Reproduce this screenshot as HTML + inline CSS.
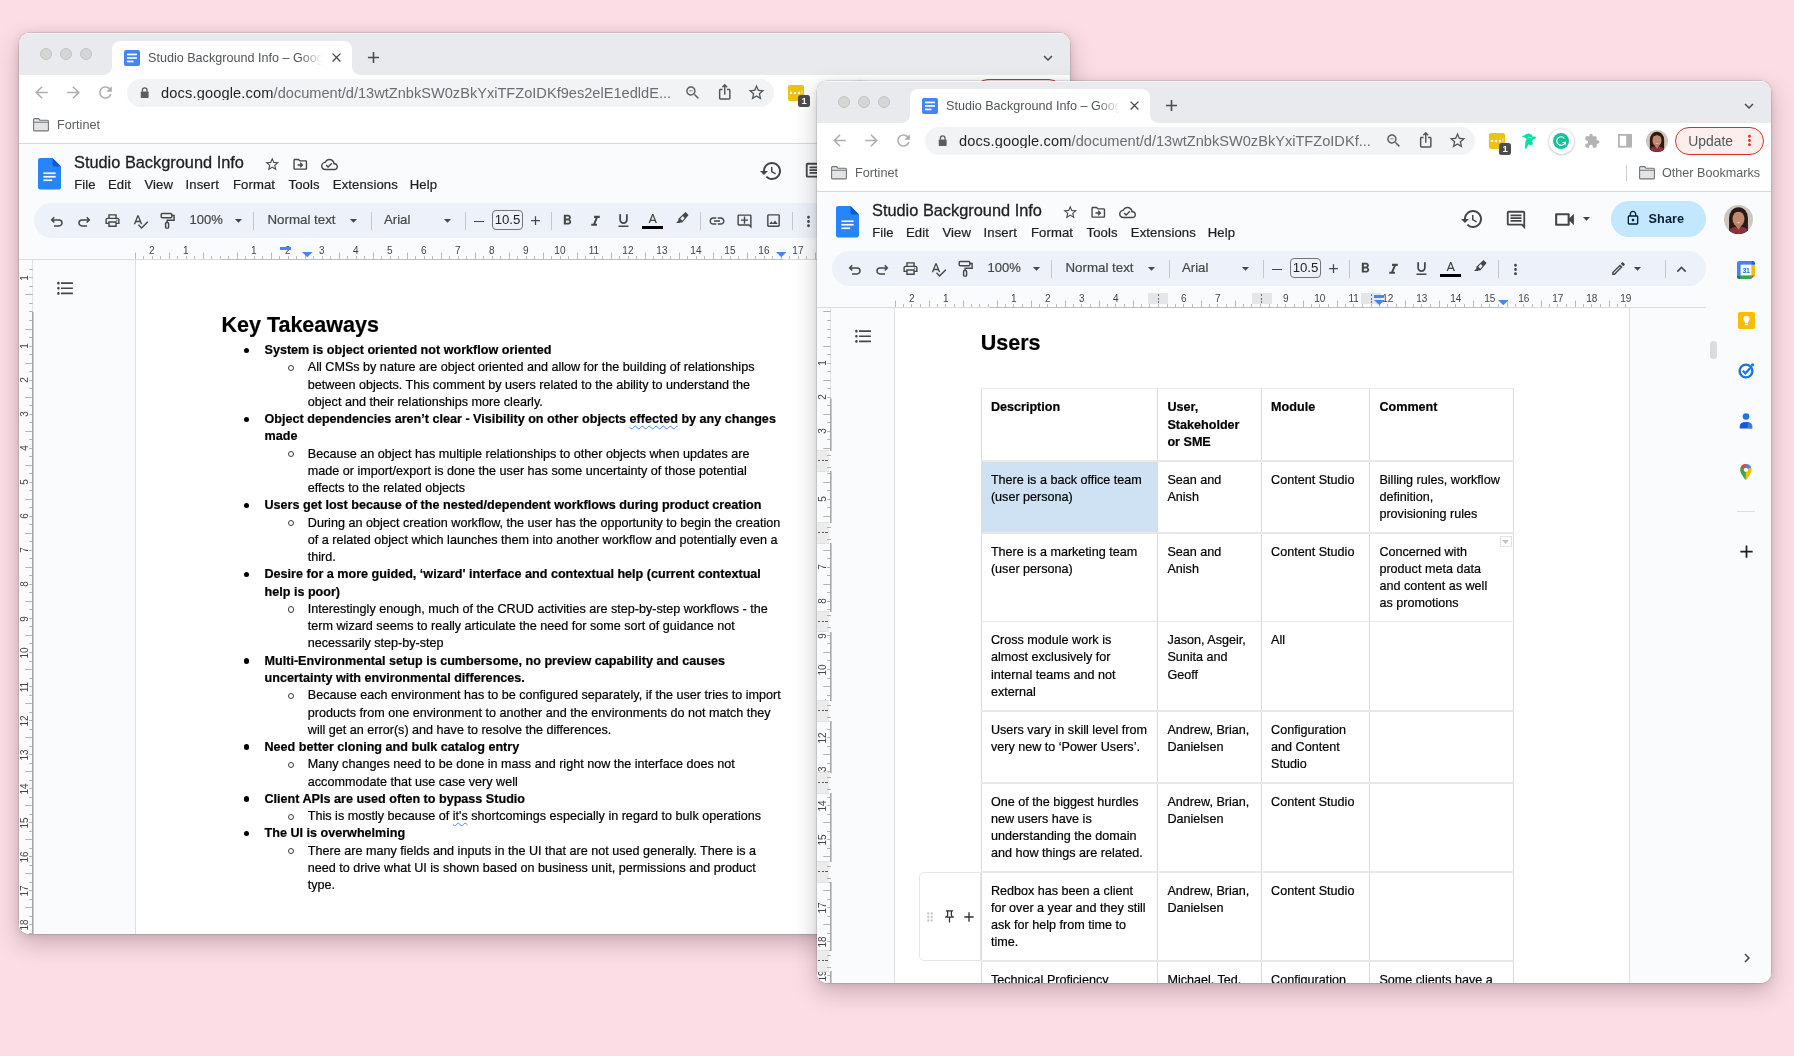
<!DOCTYPE html><html><head><meta charset="utf-8"><title>Studio Background Info</title><style>
*{box-sizing:border-box}
html,body{margin:0;padding:0}
body{width:1794px;height:1056px;background:#fcdde5;position:relative;overflow:hidden;font-family:"Liberation Sans",sans-serif;color:#000}
.win{position:absolute;border-radius:10px;overflow:hidden;background:#fff;will-change:transform}
.shadow{position:absolute;border-radius:10px;box-shadow:0 0 0 0.5px rgba(40,20,25,.22),0 9px 23px 1px rgba(30,5,12,.21),0 1px 9px rgba(30,5,12,.10)}
.abs,.ic,.t{position:absolute}
.t{white-space:nowrap;line-height:1}
.tabstrip{position:absolute;left:0;top:0;right:0;height:42px;background:#e8eaed;box-shadow:inset 0 1px 0 rgba(255,255,255,.55)}
.tl{position:absolute;width:12px;height:12px;border-radius:50%;background:#d6d6d6;border:0.5px solid #c3c3c3;top:14.9px}
.tab{position:absolute;left:93px;top:8px;width:240px;height:34px;background:#fff;border-radius:8px 8px 0 0}
.tab:before,.tab:after{content:"";position:absolute;bottom:0;width:8px;height:8px;background:radial-gradient(circle at 0 0,transparent 7.5px,#fff 8px)}
.tab:before{left:-8px}
.tab:after{right:-8px;background:radial-gradient(circle at 100% 0,transparent 7.5px,#fff 8px)}
.omni{position:absolute;left:108px;top:45.7px;height:28px;background:#f1f3f4;border-radius:14px}
.docs{position:absolute;left:0;right:0;top:110px;bottom:0;background:#f9fbfd;border-top:1px solid #d5d7db}
.pill{position:absolute;left:14.5px;top:169.8px;height:35.6px;border-radius:18px;background:#edf2fa}
.sep{position:absolute;width:1px;height:18px;top:178.6px;background:#c7c7c7}
.menu{-webkit-text-stroke:.22px #1f1f1f;position:absolute;top:144.5px;font-size:13.1px;color:#1f1f1f;white-space:nowrap;line-height:1;letter-spacing:.1px}
.tb{-webkit-text-stroke:.2px #444746;position:absolute;font-size:13px;color:#444746;white-space:nowrap;line-height:1;top:180.4px}
.page{position:absolute;background:#fff;border-left:1px solid #dcdfe3;border-right:1px solid #dcdfe3}
.doc{font-size:12.6px;line-height:17.26px;color:#000;-webkit-text-stroke:.2px #000}
.doc .l{position:absolute;white-space:nowrap;height:17.26px}
.doc b{font-weight:bold}

.rn{position:absolute;font-size:10px;color:#444;line-height:1;transform:translateX(-50%);white-space:nowrap}
.vn{position:absolute;font-size:10px;color:#444;line-height:1;white-space:nowrap;transform:translate(-50%,-50%) rotate(-90deg)}
.cell{position:absolute;border:1px solid #dcdcdc}
.sq{text-decoration:underline wavy #4285f4;text-decoration-thickness:1px;text-underline-offset:2px}
</style></head><body>
<div class="shadow" style="left:19px;top:33px;width:1051px;height:901px"></div>
<div class="win" style="left:19px;top:33px;width:1051px;height:901px">
<div class="tabstrip"></div>
<div class="tl" style="left:21px"></div>
<div class="tl" style="left:41px"></div>
<div class="tl" style="left:61px"></div>
<div class="tab"></div>
<svg class="ic" style="left:105px;top:17px" width="16" height="16" viewBox="0 0 16 16"><rect width="16" height="16" rx="2" fill="#4285f4"/><rect x="3" y="3.6" width="10" height="1.7" fill="#fff"/><rect x="3" y="7.1" width="10" height="1.7" fill="#fff"/><rect x="3" y="10.6" width="6.5" height="1.7" fill="#fff"/></svg>
<div class="abs" style="left:129px;top:17px;width:178px;height:16px;overflow:hidden"><div class="t" style="left:0;top:2.1px;font-size:12.6px;color:#50555a">Studio Background Info – Google Docs</div><div class="abs" style="right:0;top:0;width:26px;height:16px;background:linear-gradient(90deg,rgba(255,255,255,0),#fff 85%)"></div></div>
<svg class="ic" style="left:309.50px;top:17.20px" width="15" height="15" viewBox="0 0 24 24" fill="#484c50" fill-rule="evenodd"><path d="M19 6.41L17.59 5 12 10.59 6.41 5 5 6.41 10.59 12 5 17.59 6.41 19 12 13.41 17.59 19 19 17.59 13.41 12z"/></svg>
<svg class="ic" style="left:345.10px;top:15.20px" width="19" height="19" viewBox="0 0 24 24" fill="#484c50" fill-rule="evenodd"><path d="M19 13h-6v6h-2v-6H5v-2h6V5h2v6h6v2z"/></svg>
<svg class="ic" style="left:1020.00px;top:16.20px" width="18" height="18" viewBox="0 0 24 24" fill="#484c50" fill-rule="evenodd"><path d="M16.59 8.59L12 13.17 7.41 8.59 6 10l6 6 6-6z"/></svg>
<svg class="ic" style="left:12.50px;top:50.20px" width="19" height="19" viewBox="0 0 24 24" fill="#abafb3" fill-rule="evenodd"><path d="M20 11H7.83l5.59-5.59L12 4l-8 8 8 8 1.41-1.41L7.83 13H20v-2z"/></svg>
<svg class="ic" style="left:44.50px;top:50.20px" width="19" height="19" viewBox="0 0 24 24" fill="#abafb3" fill-rule="evenodd"><path d="M12 4l-1.41 1.41L16.17 11H4v2h12.17l-5.58 5.59L12 20l8-8z"/></svg>
<svg class="ic" style="left:76.80px;top:50.20px" width="19" height="19" viewBox="0 0 24 24" fill="#abafb3" fill-rule="evenodd"><path d="M17.65 6.35C16.2 4.9 14.21 4 12 4c-4.42 0-7.99 3.58-7.99 8s3.57 8 7.99 8c3.73 0 6.84-2.55 7.73-6h-2.08c-.82 2.33-3.04 4-5.65 4-3.31 0-6-2.69-6-6s2.69-6 6-6c1.66 0 3.14.69 4.22 1.78L13 11h7V4l-2.35 2.35z"/></svg>
<div class="omni" style="width:646.8px"></div>
<svg class="ic" style="left:121.3px;top:53.9px" width="9.400" height="11.6" viewBox="0 0 10 13"><path d="M2.4 5.2V3.6a2.6 2.6 0 0 1 5.2 0v1.6" fill="none" stroke="#5a5e63" stroke-width="1.5"/><rect x="0.6" y="5" width="8.8" height="7.4" rx="1" fill="#5a5e63"/></svg>
<div class="t" style="left:142px;top:52.5px;font-size:14.6px;color:#6a6e73;width:520px;overflow:hidden"><span style="color:#1f2124;letter-spacing:.15px">docs.google.com</span>/document/d/13wtZnbkSW0zBkYxiTFZoIDKf9es2elE1edldE...</div>
<svg class="ic" style="left:664.65px;top:51.15px" width="17.5" height="17.5" viewBox="0 0 24 24" fill="#5f6368" fill-rule="evenodd"><path d="M15.5 14h-.79l-.28-.27C15.41 12.59 16 11.11 16 9.5 16 5.91 13.09 3 9.5 3S3 5.91 3 9.5 5.91 16 9.5 16c1.61 0 3.09-.59 4.23-1.57l.27.28v.79l5 4.99L20.49 19l-4.99-5zm-6 0C7.01 14 5 11.99 5 9.5S7.01 5 9.5 5 14 7.01 14 9.5 11.99 14 9.5 14zM7 9h5v1H7z"/></svg>
<svg class="ic" style="left:696.65px;top:50.05px" width="17.5" height="17.5" viewBox="0 0 24 24" fill="#50555a" fill-rule="evenodd"><path d="M16 5l-1.42 1.42-1.59-1.59V16h-1.98V4.83L9.42 6.42 8 5l4-4 4 4zm4 5v11c0 1.1-.9 2-2 2H6c-1.11 0-2-.9-2-2V10c0-1.11.89-2 2-2h3v2H6v11h12V10h-3V8h3c1.1 0 2 .9 2 2z"/></svg>
<svg class="ic" style="left:728.30px;top:50.00px" width="19" height="19" viewBox="0 0 24 24" fill="#50555a" fill-rule="evenodd"><path d="M22 9.24l-7.19-.62L12 2 9.19 8.63 2 9.24l5.46 4.73L5.82 21 12 17.27 18.18 21l-1.63-7.03L22 9.24zM12 15.4l-3.76 2.27 1-4.28-3.32-2.88 4.38-.38L12 6.1l1.71 4.04 4.38.38-3.32 2.88 1 4.28L12 15.4z"/></svg>
<div class="abs" style="left:769.0px;top:52px;width:16px;height:16px;border-radius:2px;background:#eec211"></div>
<svg class="ic" style="left:769.0px;top:52px" width="16" height="16" viewBox="0 0 16 16"><circle cx="3" cy="8" r="1.250" fill="#fff"/><circle cx="7" cy="8" r="1.250" fill="#fff"/><circle cx="11" cy="8" r="1.250" fill="#fff"/><rect x="13.4" y="5.300" width="1.200" height="3.200" fill="#f6e08a"/></svg>
<div class="abs" style="left:779.2px;top:62px;width:11.8px;height:11.900px;border-radius:2.5px;background:#4d4d4d;color:#fff;font-size:9.5px;line-height:12px;text-align:center;font-weight:bold">1</div>
<svg class="ic" style="left:801.9px;top:51.800px" width="14.3" height="16.3" viewBox="0 0 14.3 16.3"><path d="M0.25 3 L3.300 2 L4.300 0.400 L5.300 1.200 L6.300 0.200 L7.800 1 Q10.3 1.300 10.4 3.400 L14 3.800 L13.8 5.300 L10.5 6.800 L10.3 8.800 L10.9 11.3 L7.800 12.6 L6.900 10.9 L3.900 16 L3 15.3 L3.400 8.800 L4.800 5.800 L2.800 4.400 L0.300 4.100 Z" fill="#06dfa4"/><path d="M6.200 4.400L9.600 4.700" stroke="#fff" stroke-width=".8"/></svg>
<div class="abs" style="left:828.5px;top:47.5px;width:25px;height:25px;border-radius:50%;background:#fff;box-shadow:0 0.5px 3px rgba(0,0,0,.32)"></div>
<svg class="ic" style="left:833.0px;top:52px" width="16" height="16" viewBox="0 0 16 16"><circle cx="8" cy="8" r="8" fill="#15c39a"/><path d="M11.4 5.300A4.300 4.300 0 1 0 12.2 9.200" fill="none" stroke="#fff" stroke-width="1.150"/><path d="M9.300 9.500 L12.400 9.300 L12.2 11.8" fill="none" stroke="#fff" stroke-width="1.100"/></svg>
<svg class="ic" style="left:864.30px;top:51.70px" width="16" height="16" viewBox="0 0 24 24" fill="#b3b3b3" fill-rule="evenodd"><path d="M20.5 11H19V7c0-1.1-.9-2-2-2h-4V3.5C13 2.12 11.88 1 10.5 1S8 2.12 8 3.5V5H4c-1.1 0-1.99.9-1.99 2v3.8H3.5c1.49 0 2.7 1.21 2.7 2.7s-1.21 2.7-2.7 2.7H2V20c0 1.1.9 2 2 2h3.8v-1.5c0-1.49 1.21-2.7 2.7-2.7 1.49 0 2.7 1.21 2.7 2.7V22H17c1.1 0 2-.9 2-2v-4h1.5c1.38 0 2.5-1.12 2.5-2.5S21.88 11 20.5 11z"/></svg>
<svg class="ic" style="left:897.8px;top:53px" width="14.3" height="13.600" viewBox="0 0 14.3 13.600"><rect x=".9" y=".9" width="12.5" height="11.800" fill="#fff" stroke="#b3b3b3" stroke-width="1.800"/><rect x="8.200" y=".9" width="5.200" height="11.800" fill="#b3b3b3"/></svg>
<svg class="ic" style="left:926.00px;top:48.70px" width="22" height="22" viewBox="0 0 40 40"><defs><clipPath id="c"><circle cx="20" cy="20" r="20"/></clipPath></defs><g clip-path="url(#c)"><rect width="40" height="40" fill="#cfc7bd"/><ellipse cx="20" cy="18" rx="13" ry="15" fill="#2a1a17"/><rect x="7" y="18" width="26" height="24" fill="#2a1a17"/><ellipse cx="20" cy="19" rx="8.2" ry="10.5" fill="#c08a6c"/><path d="M11 14 Q20 2 29 14 Q24 9 20 9.5 Q15 9 11 14z" fill="#2a1a17"/><path d="M4 42 Q6 31 16 30 L20 33 L24 30 Q34 31 36 42z" fill="#8c2f3f"/><path d="M16 29 L20 34 L24 29 L24 26 L16 26z" fill="#b57f62"/><path d="M16.5 23.5 Q20 26.5 23.5 23.5 Q20 25 16.5 23.5z" fill="#fff"/></g></svg>
<div class="abs" style="left:955.0px;top:46px;width:88.5px;height:27.6px;border-radius:14px;border:1px solid #d93025;background:#fceeed"></div>
<div class="t" style="left:968.20px;top:54.20px;font-size:13.9px;color:#50555a;">Update</div>
<svg class="ic" style="left:1020.50px;top:51.30px" width="17" height="17" viewBox="0 0 24 24" fill="#d93025" fill-rule="evenodd"><path d="M12 8c1.1 0 2-.9 2-2s-.9-2-2-2-2 .9-2 2 .9 2 2 2zm0 2c-1.1 0-2 .9-2 2s.9 2 2 2 2-.9 2-2-.9-2-2-2zm0 6c-1.1 0-2 .9-2 2s.9 2 2 2 2-.9 2-2-.9-2-2-2z"/></svg>
<svg class="ic" style="left:14.0px;top:85.2px" width="16" height="13.5" viewBox="0 0 16 13.5"><path d="M0.6 1.6 q0-1 1-1 h4 l1.3 1.6 h7.5 q1 0 1 1 v8.7 q0 1 -1 1 h-12.8 q-1 0 -1-1z" fill="#e3e4e6" stroke="#70757a" stroke-width="1.1"/><path d="M0.6 4.2h14.8" stroke="#70757a" stroke-width="1.1"/></svg>
<div class="t" style="left:38.00px;top:86.30px;font-size:12.7px;color:#5a5e63;">Fortinet</div>
<div class="abs" style="left:906.3px;top:83.5px;width:1px;height:16px;background:#c9ccd0"></div>
<svg class="ic" style="left:918.5px;top:85.2px" width="16" height="13.5" viewBox="0 0 16 13.5"><path d="M0.6 1.6 q0-1 1-1 h4 l1.3 1.6 h7.5 q1 0 1 1 v8.7 q0 1 -1 1 h-12.8 q-1 0 -1-1z" fill="#e3e4e6" stroke="#70757a" stroke-width="1.1"/><path d="M0.6 4.2h14.8" stroke="#70757a" stroke-width="1.1"/></svg>
<div class="t" style="left:942.00px;top:86.30px;font-size:12.6px;color:#5a5e63;">Other Bookmarks</div>
<div class="docs"></div>
<svg class="ic" style="left:19px;top:125px" width="23" height="31.5" viewBox="0 0 23 31.5"><path d="M2.2 0H14.5L23 8.5V29.3q0 2.2-2.2 2.2H2.2Q0 31.500 0 29.300V2.200Q0 0 2.200 0z" fill="#2684fc"/><path d="M14.5 0L23 8.5H16.700q-2.200 0-2.200-2.200z" fill="#0a5ad4"/><rect x="5.4" y="14.400" width="12.200" height="1.700" fill="#fff"/><rect x="5.4" y="17.900" width="12.200" height="1.700" fill="#fff"/><rect x="5.4" y="21.400" width="8.800" height="1.700" fill="#fff"/></svg>
<div class="t" style="left:55.00px;top:121.30px;font-size:16.35px;color:#1f1f1f;-webkit-text-stroke:.3px #1f1f1f">Studio Background Info</div>
<svg class="ic" style="left:244.55px;top:122.75px" width="16.5" height="16.5" viewBox="0 0 24 24" fill="#444746" fill-rule="evenodd"><path d="M22 9.24l-7.19-.62L12 2 9.19 8.63 2 9.24l5.46 4.73L5.82 21 12 17.27 18.18 21l-1.63-7.03L22 9.24zM12 15.4l-3.76 2.27 1-4.28-3.32-2.88 4.38-.38L12 6.1l1.71 4.04 4.38.38-3.32 2.88 1 4.28L12 15.4z"/></svg>
<svg class="ic" style="left:273.35px;top:122.75px" width="16.5" height="16.5" viewBox="0 0 24 24" fill="#444746" fill-rule="evenodd"><path d="M20 6h-8l-2-2H4c-1.1 0-2 .9-2 2v12c0 1.1.9 2 2 2h16c1.1 0 2-.9 2-2V8c0-1.1-.9-2-2-2zm0 12H4V6h5.17l2 2H20v10zm-7.5-1l4-4-4-4-1.41 1.41L12.67 12H8v2h4.67l-1.58 1.59L12.5 17z"/></svg>
<svg class="ic" style="left:301.70px;top:122.50px" width="17" height="17" viewBox="0 0 24 24" fill="#444746" fill-rule="evenodd"><path d="M19.35 10.04C18.67 6.59 15.64 4 12 4 9.11 4 6.6 5.64 5.35 8.04 2.34 8.36 0 10.91 0 14c0 3.31 2.69 6 6 6h13c2.76 0 5-2.24 5-5 0-2.64-2.05-4.78-4.65-4.96zM19 18H6c-2.21 0-4-1.79-4-4s1.79-4 4-4h.71C7.37 7.69 9.48 6 12 6c3.04 0 5.5 2.46 5.5 5.5v.5H19c1.66 0 3 1.34 3 3s-1.34 3-3 3zm-9-3.82l-2.09-2.09L6.5 13.5 10 17l6.01-6.01-1.41-1.41z"/></svg>
<div class="menu" style="left:55.2px">File</div>
<div class="menu" style="left:89px">Edit</div>
<div class="menu" style="left:125.5px">View</div>
<div class="menu" style="left:166.6px">Insert</div>
<div class="menu" style="left:214px">Format</div>
<div class="menu" style="left:269.6px">Tools</div>
<div class="menu" style="left:313.8px">Extensions</div>
<div class="menu" style="left:390.7px">Help</div>
<svg class="ic" style="left:739.70px;top:125.60px" width="24" height="24" viewBox="0 0 24 24" fill="#444746" fill-rule="evenodd"><path d="M13 3c-4.97 0-9 4.03-9 9H1l3.89 3.89.07.14L9 12H6c0-3.87 3.13-7 7-7s7 3.13 7 7-3.13 7-7 7c-1.93 0-3.68-.79-4.94-2.06l-1.42 1.42C8.27 19.99 10.51 21 13 21c4.97 0 9-4.03 9-9s-4.03-9-9-9zm-1 5v5l4.28 2.54.72-1.21-3.5-2.08V8H12z"/></svg>
<svg class="ic" style="left:785.00px;top:127.50px" width="22" height="22" viewBox="0 0 24 24" fill="#444746" fill-rule="evenodd"><path d="M21.99 4c0-1.1-.89-2-1.99-2H4c-1.1 0-2 .9-2 2v12c0 1.1.9 2 2 2h14l4 4-.01-18zM20 4v13.17L18.83 16H4V4h16zM6 12h12v2H6zm0-3h12v2H6zm0-3h12v2H6z"/></svg>
<svg class="ic" style="left:831.50px;top:125.50px" width="25" height="25" viewBox="0 0 24 24" fill="#444746" fill-rule="evenodd"><path d="M15 8v8H5V8h10m1-2H4c-.55 0-1 .45-1 1v10c0 .55.45 1 1 1h12c.55 0 1-.45 1-1v-3.5l4 4v-11l-4 4V7c0-.55-.45-1-1-1z"/></svg>
<svg class="ic" style="left:857.50px;top:129.10px" width="17" height="17" viewBox="0 0 24 24" fill="#444746" fill-rule="evenodd"><path d="M7 10l5 5 5-5z"/></svg>
<div class="abs" style="left:890.7px;top:120px;width:95.3px;height:35.8px;border-radius:18px;background:#c2e7ff"></div>
<svg class="ic" style="left:905.00px;top:129.30px" width="16" height="16" viewBox="0 0 24 24" fill="#001d35" fill-rule="evenodd"><path d="M18 8h-1V6c0-2.76-2.24-5-5-5S7 3.24 7 6v2H6c-1.1 0-2 .9-2 2v10c0 1.1.9 2 2 2h12c1.1 0 2-.9 2-2V10c0-1.1-.9-2-2-2zM9 6c0-1.66 1.34-3 3-3s3 1.34 3 3v2H9V6zm9 14H6V10h12v10zm-6-3c1.1 0 2-.9 2-2s-.9-2-2-2-2 .9-2 2 .9 2 2 2z"/></svg>
<div class="t" style="left:928.50px;top:131.90px;font-size:12.7px;color:#001d35;letter-spacing:.1px"><b>Share</b></div>
<svg class="ic" style="left:1004.10px;top:123.50px" width="29.0" height="29.0" viewBox="0 0 40 40"><defs><clipPath id="c"><circle cx="20" cy="20" r="20"/></clipPath></defs><g clip-path="url(#c)"><rect width="40" height="40" fill="#cfc7bd"/><ellipse cx="20" cy="18" rx="13" ry="15" fill="#2a1a17"/><rect x="7" y="18" width="26" height="24" fill="#2a1a17"/><ellipse cx="20" cy="19" rx="8.2" ry="10.5" fill="#c08a6c"/><path d="M11 14 Q20 2 29 14 Q24 9 20 9.5 Q15 9 11 14z" fill="#2a1a17"/><path d="M4 42 Q6 31 16 30 L20 33 L24 30 Q34 31 36 42z" fill="#8c2f3f"/><path d="M16 29 L20 34 L24 29 L24 26 L16 26z" fill="#b57f62"/><path d="M16.5 23.5 Q20 26.5 23.5 23.5 Q20 25 16.5 23.5z" fill="#fff"/></g></svg>
<div class="pill" style="width:971.5px"></div>
<svg class="ic" style="left:29.799999999999997px;top:179.7px" width="16" height="16" viewBox="0 0 16 16" fill="none" stroke="#444746" stroke-width="1.5"><path d="M5.2 4.3 L2.7 6.9 L5.3 9.5"/><path d="M3 6.9 H10 A3 3 0 0 1 10 12.9 H5"/></svg>
<svg class="ic" style="left:57.2px;top:179.7px" width="16" height="16" viewBox="0 0 16 16" fill="none" stroke="#444746" stroke-width="1.5"><path d="M10.8 4.3 L13.3 6.9 L10.700 9.5"/><path d="M13 6.9 H6 A3 3 0 0 0 6 12.9 H11"/></svg>
<svg class="ic" style="left:85.00px;top:179.20px" width="17" height="17" viewBox="0 0 24 24" fill="#444746" fill-rule="evenodd"><path d="M19 8h-1V3H6v5H5c-1.66 0-3 1.34-3 3v6h4v4h12v-4h4v-6c0-1.66-1.34-3-3-3zM8 5h8v3H8V5zm8 14H8v-4h8v4zm2-4v-2H6v2H4v-4c0-.55.45-1 1-1h14c.55 0 1 .45 1 1v4h-2zM18 10.5c-.55 0-1 .45-1 1s.45 1 1 1 1-.45 1-1-.45-1-1-1z"/></svg>
<svg class="ic" style="left:113.00px;top:179.70px" width="17" height="17" viewBox="0 0 24 24" fill="#444746" fill-rule="evenodd"><path d="M12.45 16h2.09L9.43 3H7.57L2.46 16h2.09l1.12-3h5.64l1.14 3zm-6.02-5L8.5 5.48 10.57 11H6.43zm15.16.59l-8.09 8.09L9.83 16l-1.41 1.41 5.09 5.09L23 13l-1.41-1.41z"/></svg>
<svg class="ic" style="left:140.6px;top:179.1px" width="16" height="18" viewBox="0 0 16 18" fill="none" stroke="#444746" stroke-width="1.45"><rect x="1.2" y="1.400" width="10.6" height="4.300" rx="1"/><path d="M11.8 3.500H14.1V8.300H7.100V10.5"/><rect x="5.6" y="10.5" width="3" height="5.600" rx=".9"/></svg>
<div class="tb" style="left:170.6px">100%</div>
<svg class="ic" style="left:211.00px;top:179.40px" width="17" height="17" viewBox="0 0 24 24" fill="#444746" fill-rule="evenodd"><path d="M7 10l5 5 5-5z"/></svg>
<div class="sep" style="left:234.4px"></div>
<div class="tb" style="left:248.5px;font-size:13.3px">Normal text</div>
<svg class="ic" style="left:326.00px;top:179.40px" width="17" height="17" viewBox="0 0 24 24" fill="#444746" fill-rule="evenodd"><path d="M7 10l5 5 5-5z"/></svg>
<div class="sep" style="left:351.5px"></div>
<div class="tb" style="left:365px;font-size:13.2px">Arial</div>
<svg class="ic" style="left:419.50px;top:179.40px" width="17" height="17" viewBox="0 0 24 24" fill="#444746" fill-rule="evenodd"><path d="M7 10l5 5 5-5z"/></svg>
<div class="sep" style="left:445.5px"></div>
<div class="abs" style="left:454.600px;top:187.5px;width:10px;height:1.5px;background:#444746"></div>
<div class="abs" style="left:473.3px;top:176.6px;width:30.4px;height:20.6px;border:1px solid #747775;border-radius:4px;font-size:13.2px;line-height:18.6px;text-align:center;color:#1f1f1f">10.5</div>
<svg class="ic" style="left:509.00px;top:180.20px" width="15" height="15" viewBox="0 0 24 24" fill="#444746" fill-rule="evenodd"><path d="M19 13h-6v6h-2v-6H5v-2h6V5h2v6h6v2z"/></svg>
<div class="sep" style="left:531.5px"></div>
<svg class="ic" style="left:539.95px;top:179.35px" width="16.5" height="16.5" viewBox="0 0 24 24" fill="#444746" fill-rule="evenodd"><path d="M15.6 10.79c.97-.67 1.65-1.77 1.65-2.79 0-2.26-1.75-4-4-4H7v14h7.04c2.09 0 3.71-1.7 3.71-3.79 0-1.52-.86-2.82-2.15-3.42zM10 6.5h3c.83 0 1.5.67 1.5 1.5s-.67 1.5-1.5 1.5h-3v-3zm3.5 9H10v-3h3.5c.83 0 1.5.67 1.5 1.5s-.67 1.5-1.5 1.5z"/></svg>
<svg class="ic" style="left:568.00px;top:179.70px" width="17" height="17" viewBox="0 0 24 24" fill="#444746" fill-rule="evenodd"><path d="M10 4v3h2.21l-3.42 8H6v3h8v-3h-2.21l3.42-8H18V4z"/></svg>
<svg class="ic" style="left:595.80px;top:179.30px" width="17" height="17" viewBox="0 0 24 24" fill="#444746" fill-rule="evenodd"><path d="M12 17c3.31 0 6-2.69 6-6V3h-2.5v8c0 1.93-1.57 3.5-3.5 3.5S8.5 12.93 8.5 11V3H6v8c0 3.31 2.69 6 6 6zm-7 2v2h14v-2H5z"/></svg>
<svg class="ic" style="left:625.65px;top:178.85px" width="15.5" height="15.5" viewBox="0 0 24 24" fill="#444746" fill-rule="evenodd"><path d="M11 3L5.5 17h2.25l1.12-3h6.25l1.12 3h2.25L13 3h-2zm-1.38 9L12 5.67 14.38 12H9.62z"/></svg>
<div class="abs" style="left:623px;top:192.8px;width:21px;height:3.2px;background:#000"></div>
<svg class="ic" style="left:657.4px;top:179px" width="12.6" height="11.2" viewBox="0 0 12.6 11.2" fill-rule="evenodd"><path d="M9.500 0 L12.6 3.100 L6.300 10.4 L4.300 10.4 L3.700 11.1 L0 11.1 L2.400 8.600 L2.400 6.700 Z M4.300 6.700 L6.300 8.700 L8.700 5.900 L6.700 3.900 Z" fill="#444746"/></svg>
<div class="sep" style="left:680.8px"></div>
<svg class="ic" style="left:688.70px;top:178.90px" width="18" height="18" viewBox="0 0 24 24" fill="#444746" fill-rule="evenodd"><path d="M3.9 12c0-1.71 1.39-3.1 3.1-3.1h4V7H7c-2.76 0-5 2.24-5 5s2.24 5 5 5h4v-1.9H7c-1.71 0-3.1-1.39-3.1-3.1zM8 13h8v-2H8v2zm9-6h-4v1.9h4c1.71 0 3.1 1.39 3.1 3.1s-1.39 3.1-3.1 3.1h-4V17h4c2.76 0 5-2.24 5-5s-2.24-5-5-5z"/></svg>
<svg class="ic" style="left:717.30px;top:180.00px" width="17" height="17" viewBox="0 0 24 24" fill="#444746" fill-rule="evenodd"><path d="M22 4c0-1.1-.9-2-2-2H4c-1.1 0-2 .9-2 2v12c0 1.1.9 2 2 2h14l4 4V4zm-2 13.17L18.83 16H4V4h16v13.17zM13 5h-2v4H7v2h4v4h2v-4h4V9h-4z"/></svg>
<svg class="ic" style="left:745.50px;top:179.40px" width="17" height="17" viewBox="0 0 24 24" fill="#444746" fill-rule="evenodd"><path d="M19 5v14H5V5h14m0-2H5c-1.1 0-2 .9-2 2v14c0 1.1.9 2 2 2h14c1.1 0 2-.9 2-2V5c0-1.1-.9-2-2-2zm-4.86 8.86l-3 3.87L9 13.14 6 17h12l-3.86-5.14z"/></svg>
<div class="sep" style="left:773px"></div>
<svg class="ic" style="left:781.20px;top:179.60px" width="17" height="17" viewBox="0 0 24 24" fill="#444746" fill-rule="evenodd"><path d="M12 8c1.1 0 2-.9 2-2s-.9-2-2-2-2 .9-2 2 .9 2 2 2zm0 2c-1.1 0-2 .9-2 2s.9 2 2 2 2-.9 2-2-.9-2-2-2zm0 6c-1.1 0-2 .9-2 2s.9 2 2 2 2-.9 2-2-.9-2-2-2z"/></svg>
<div class="page" style="left:115.5px;top:227px;width:736px;height:674px"></div>
<div class="abs" style="left:0;top:226px;width:986px;height:1px;background:#d9dce0"></div>
<div class="abs" style="left:202.0px;top:225.5px;width:562.2px;height:1.3px;background:#bdc0c3"></div>
<svg class="ic" style="left:0;top:0" width="1051" height="230"><path d="M116.50 219.400V226 M124.50 223V226 M133.50 223V226 M141.50 223V226 M150.50 219.400V226 M158.50 223V226 M167.50 223V226 M175.50 223V226 M184.50 219.400V226 M192.50 223V226 M201.50 223V226 M209.50 223V226 M218.50 219.400V226 M226.50 223V226 M235.50 223V226 M243.50 223V226 M252.50 219.400V226 M260.50 223V226 M269.50 223V226 M277.50 223V226 M286.50 219.400V226 M294.50 223V226 M303.50 223V226 M311.50 223V226 M320.50 219.400V226 M328.50 223V226 M337.50 223V226 M345.50 223V226 M354.50 219.400V226 M362.50 223V226 M371.50 223V226 M379.50 223V226 M388.50 219.400V226 M396.50 223V226 M405.50 223V226 M413.50 223V226 M422.50 219.400V226 M430.50 223V226 M439.50 223V226 M447.50 223V226 M456.50 219.400V226 M464.50 223V226 M473.50 223V226 M481.50 223V226 M490.50 219.400V226 M498.50 223V226 M507.50 223V226 M515.50 223V226 M524.50 219.400V226 M532.50 223V226 M541.50 223V226 M549.50 223V226 M558.50 219.400V226 M566.50 223V226 M575.50 223V226 M583.50 223V226 M592.50 219.400V226 M600.50 223V226 M609.50 223V226 M617.50 223V226 M626.50 219.400V226 M634.50 223V226 M643.50 223V226 M651.50 223V226 M660.50 219.400V226 M668.50 223V226 M677.50 223V226 M685.50 223V226 M694.50 219.400V226 M702.50 223V226 M711.50 223V226 M719.50 223V226 M728.50 219.400V226 M736.50 223V226 M745.50 223V226 M753.50 223V226 M762.50 219.400V226 M770.50 223V226 M779.50 223V226 M787.50 223V226 M796.50 219.400V226 M804.50 223V226 M813.50 223V226 M821.50 223V226 M830.50 219.400V226 M838.50 223V226 M847.50 223V226" stroke="#b9bcbf" stroke-width="1" fill="none"/></svg>
<div class="rn" style="left:166.9px;top:212.800px">1</div>
<div class="rn" style="left:132.9px;top:212.800px">2</div>
<div class="rn" style="left:234.9px;top:212.800px">1</div>
<div class="rn" style="left:268.9px;top:212.800px">2</div>
<div class="rn" style="left:302.9px;top:212.800px">3</div>
<div class="rn" style="left:336.9px;top:212.800px">4</div>
<div class="rn" style="left:370.9px;top:212.800px">5</div>
<div class="rn" style="left:404.9px;top:212.800px">6</div>
<div class="rn" style="left:438.9px;top:212.800px">7</div>
<div class="rn" style="left:472.9px;top:212.800px">8</div>
<div class="rn" style="left:506.9px;top:212.800px">9</div>
<div class="rn" style="left:540.9px;top:212.800px">10</div>
<div class="rn" style="left:574.9px;top:212.800px">11</div>
<div class="rn" style="left:608.9px;top:212.800px">12</div>
<div class="rn" style="left:642.9px;top:212.800px">13</div>
<div class="rn" style="left:676.9px;top:212.800px">14</div>
<div class="rn" style="left:710.9px;top:212.800px">15</div>
<div class="rn" style="left:744.9px;top:212.800px">16</div>
<div class="rn" style="left:778.9px;top:212.800px">17</div>
<div class="rn" style="left:812.9px;top:212.800px">18</div>
<div class="rn" style="left:846.9px;top:212.800px">19</div>
<div class="rn" style="left:880.9px;top:212.800px">20</div>
<div class="rn" style="left:914.9px;top:212.800px">21</div>
<div class="rn" style="left:948.9px;top:212.800px">22</div>
<div class="rn" style="left:982.9px;top:212.800px">23</div>
<div class="rn" style="left:1016.9px;top:212.800px">24</div>
<div class="abs" style="left:261.1px;top:214.4px;width:10.9px;height:2.8px;background:#4285f4"></div>
<svg class="ic" style="left:283px;top:218.600px" width="10.6" height="5.200"><path d="M0 0H10.6L5.3 5.2z" fill="#4285f4"/></svg>
<svg class="ic" style="left:756.700px;top:218.600px" width="10.6" height="5.200"><path d="M0 0H10.6L5.3 5.2z" fill="#4285f4"/></svg>
<div class="abs" style="left:0;top:227px;width:13.6px;height:674px;background:#f9fbfd"></div>
<div class="abs" style="left:13.3px;top:227px;width:1px;height:674px;background:#dfe2e5"></div>
<svg class="ic" style="left:0;top:0" width="16" height="901"><path d="M10.2 236.50H13.6 M10.2 244.50H13.6 M10.2 253.50H13.6 M6.3 261.50H13.6 M10.2 270.50H13.6 M10.2 278.50H13.6 M10.2 287.50H13.6 M6.3 296.50H13.6 M10.2 304.50H13.6 M10.2 313.50H13.6 M10.2 321.50H13.6 M6.3 330.50H13.6 M10.2 338.50H13.6 M10.2 347.50H13.6 M10.2 355.50H13.6 M6.3 364.50H13.6 M10.2 372.50H13.6 M10.2 381.50H13.6 M10.2 389.50H13.6 M6.3 398.50H13.6 M10.2 406.50H13.6 M10.2 415.50H13.6 M10.2 423.50H13.6 M6.3 432.50H13.6 M10.2 440.50H13.6 M10.2 449.50H13.6 M10.2 457.50H13.6 M6.3 466.50H13.6 M10.2 474.50H13.6 M10.2 483.50H13.6 M10.2 491.50H13.6 M6.3 500.50H13.6 M10.2 508.50H13.6 M10.2 517.50H13.6 M10.2 525.50H13.6 M6.3 534.50H13.6 M10.2 542.50H13.6 M10.2 551.50H13.6 M10.2 559.50H13.6 M6.3 568.50H13.6 M10.2 576.50H13.6 M10.2 585.50H13.6 M10.2 593.50H13.6 M6.3 602.50H13.6 M10.2 610.50H13.6 M10.2 619.50H13.6 M10.2 628.50H13.6 M6.3 636.50H13.6 M10.2 645.50H13.6 M10.2 653.50H13.6 M10.2 662.50H13.6 M6.3 670.50H13.6 M10.2 679.50H13.6 M10.2 687.50H13.6 M10.2 696.50H13.6 M6.3 704.50H13.6 M10.2 713.50H13.6 M10.2 721.50H13.6 M10.2 730.50H13.6 M6.3 738.50H13.6 M10.2 747.50H13.6 M10.2 755.50H13.6 M10.2 764.50H13.6 M6.3 772.50H13.6 M10.2 781.50H13.6 M10.2 789.50H13.6 M10.2 798.50H13.6 M6.3 806.50H13.6 M10.2 815.50H13.6 M10.2 823.50H13.6 M10.2 832.50H13.6 M6.3 840.50H13.6 M10.2 849.50H13.6 M10.2 857.50H13.6 M10.2 866.50H13.6 M6.3 874.50H13.6 M10.2 883.50H13.6 M10.2 891.50H13.6 M10.2 900.50H13.6" stroke="#b0b3b6" stroke-width="1" fill="none"/><path d="M13.8 279V901" stroke="#a6a9ac" stroke-width="1.6"/></svg>
<div class="vn" style="left:6px;top:244.9px">1</div>
<div class="vn" style="left:6px;top:313.1px">1</div>
<div class="vn" style="left:6px;top:347.1px">2</div>
<div class="vn" style="left:6px;top:381.1px">3</div>
<div class="vn" style="left:6px;top:415.2px">4</div>
<div class="vn" style="left:6px;top:449.2px">5</div>
<div class="vn" style="left:6px;top:483.3px">6</div>
<div class="vn" style="left:6px;top:517.3px">7</div>
<div class="vn" style="left:6px;top:551.4px">8</div>
<div class="vn" style="left:6px;top:585.5px">9</div>
<div class="vn" style="left:6px;top:619.5px">10</div>
<div class="vn" style="left:6px;top:653.5px">11</div>
<div class="vn" style="left:6px;top:687.6px">12</div>
<div class="vn" style="left:6px;top:721.6px">13</div>
<div class="vn" style="left:6px;top:755.7px">14</div>
<div class="vn" style="left:6px;top:789.8px">15</div>
<div class="vn" style="left:6px;top:823.8px">16</div>
<div class="vn" style="left:6px;top:857.8px">17</div>
<div class="vn" style="left:6px;top:891.9px">18</div>
<svg class="ic" style="left:35.75px;top:245.35px" width="20.5" height="20.5" viewBox="0 0 24 24" fill="#444746" fill-rule="evenodd"><path d="M4 10.5c-.83 0-1.5.67-1.5 1.5s.67 1.5 1.5 1.5 1.5-.67 1.5-1.5-.67-1.5-1.5-1.5zm0-6c-.83 0-1.5.67-1.5 1.5S3.17 7.5 4 7.5 5.5 6.83 5.5 6 4.83 4.5 4 4.5zm0 12c-.83 0-1.5.68-1.5 1.5s.68 1.5 1.5 1.5 1.5-.68 1.5-1.5-.67-1.5-1.5-1.5zM7 19h14v-2H7v2zm0-6h14v-2H7v2zm0-8v2h14V5H7z"/></svg>
<div class="doc">
<div class="l" style="left:202.5px;top:280.30px;font-size:21.5px;line-height:24px;height:24px"><b>Key Takeaways</b></div>
<div class="l" style="left:245.5px;top:309.07px"><b>System is object oriented not workflow oriented</b></div>
<div class="abs" style="left:224.80px;top:314.50px;width:5.6px;height:5.6px;border-radius:50%;background:#000"></div>
<div class="l" style="left:288.800px;top:326.33px">All CMSs by nature are object oriented and allow for the building of relationships</div>
<div class="abs" style="left:268.50px;top:331.76px;width:6.2px;height:6.2px;border-radius:50%;border:0.75px solid #3a3a3a"></div>
<div class="l" style="left:288.800px;top:343.59px">between objects. This comment by users related to the ability to understand the</div>
<div class="l" style="left:288.800px;top:360.85px">object and their relationships more clearly.</div>
<div class="l" style="left:245.5px;top:378.11px"><b>Object dependencies aren’t clear - Visibility on other objects <span class="sq">effected</span> by any changes</b></div>
<div class="abs" style="left:224.80px;top:383.54px;width:5.6px;height:5.6px;border-radius:50%;background:#000"></div>
<div class="l" style="left:245.5px;top:395.37px"><b>made</b></div>
<div class="l" style="left:288.800px;top:412.63px">Because an object has multiple relationships to other objects when updates are</div>
<div class="abs" style="left:268.50px;top:418.06px;width:6.2px;height:6.2px;border-radius:50%;border:0.75px solid #3a3a3a"></div>
<div class="l" style="left:288.800px;top:429.89px">made or import/export is done the user has some uncertainty of those potential</div>
<div class="l" style="left:288.800px;top:447.15px">effects to the related objects</div>
<div class="l" style="left:245.5px;top:464.41px"><b>Users get lost because of the nested/dependent workflows during product creation</b></div>
<div class="abs" style="left:224.80px;top:469.84px;width:5.6px;height:5.6px;border-radius:50%;background:#000"></div>
<div class="l" style="left:288.800px;top:481.67px">During an object creation workflow, the user has the opportunity to begin the creation</div>
<div class="abs" style="left:268.50px;top:487.10px;width:6.2px;height:6.2px;border-radius:50%;border:0.75px solid #3a3a3a"></div>
<div class="l" style="left:288.800px;top:498.93px">of a related object which launches them into another workflow and potentially even a</div>
<div class="l" style="left:288.800px;top:516.19px">third.</div>
<div class="l" style="left:245.5px;top:533.45px"><b>Desire for a more guided, ‘wizard' interface and contextual help (current contextual</b></div>
<div class="abs" style="left:224.80px;top:538.88px;width:5.6px;height:5.6px;border-radius:50%;background:#000"></div>
<div class="l" style="left:245.5px;top:550.71px"><b>help is poor)</b></div>
<div class="l" style="left:288.800px;top:567.97px">Interestingly enough, much of the CRUD activities are step-by-step workflows - the</div>
<div class="abs" style="left:268.50px;top:573.40px;width:6.2px;height:6.2px;border-radius:50%;border:0.75px solid #3a3a3a"></div>
<div class="l" style="left:288.800px;top:585.23px">term wizard seems to really articulate the need for some sort of guidance not</div>
<div class="l" style="left:288.800px;top:602.49px">necessarily step-by-step</div>
<div class="l" style="left:245.5px;top:619.75px"><b>Multi-Environmental setup is cumbersome, no preview capability and causes</b></div>
<div class="abs" style="left:224.80px;top:625.18px;width:5.6px;height:5.6px;border-radius:50%;background:#000"></div>
<div class="l" style="left:245.5px;top:637.01px"><b>uncertainty with environmental differences.</b></div>
<div class="l" style="left:288.800px;top:654.27px">Because each environment has to be configured separately, if the user tries to import</div>
<div class="abs" style="left:268.50px;top:659.70px;width:6.2px;height:6.2px;border-radius:50%;border:0.75px solid #3a3a3a"></div>
<div class="l" style="left:288.800px;top:671.53px">products from one environment to another and the environments do not match they</div>
<div class="l" style="left:288.800px;top:688.79px">will get an error(s) and have to resolve the differences.</div>
<div class="l" style="left:245.5px;top:706.05px"><b>Need better cloning and bulk catalog entry</b></div>
<div class="abs" style="left:224.80px;top:711.48px;width:5.6px;height:5.6px;border-radius:50%;background:#000"></div>
<div class="l" style="left:288.800px;top:723.31px">Many changes need to be done in mass and right now the interface does not</div>
<div class="abs" style="left:268.50px;top:728.74px;width:6.2px;height:6.2px;border-radius:50%;border:0.75px solid #3a3a3a"></div>
<div class="l" style="left:288.800px;top:740.57px">accommodate that use case very well</div>
<div class="l" style="left:245.5px;top:757.83px"><b>Client APIs are used often to bypass Studio</b></div>
<div class="abs" style="left:224.80px;top:763.26px;width:5.6px;height:5.6px;border-radius:50%;background:#000"></div>
<div class="l" style="left:288.800px;top:775.09px">This is mostly because of <span class="sq">it's</span> shortcomings especially in regard to bulk operations</div>
<div class="abs" style="left:268.50px;top:780.52px;width:6.2px;height:6.2px;border-radius:50%;border:0.75px solid #3a3a3a"></div>
<div class="l" style="left:245.5px;top:792.35px"><b>The UI is overwhelming</b></div>
<div class="abs" style="left:224.80px;top:797.78px;width:5.6px;height:5.6px;border-radius:50%;background:#000"></div>
<div class="l" style="left:288.800px;top:809.61px">There are many fields and inputs in the UI that are not used generally. There is a</div>
<div class="abs" style="left:268.50px;top:815.04px;width:6.2px;height:6.2px;border-radius:50%;border:0.75px solid #3a3a3a"></div>
<div class="l" style="left:288.800px;top:826.87px">need to drive what UI is shown based on business unit, permissions and product</div>
<div class="l" style="left:288.800px;top:844.13px">type.</div>
</div>
</div>
<div class="shadow" style="left:817px;top:81px;width:954px;height:902px"></div>
<div class="win" style="left:817px;top:81px;width:954px;height:902px">
<div class="tabstrip"></div>
<div class="tl" style="left:21px"></div>
<div class="tl" style="left:41px"></div>
<div class="tl" style="left:61px"></div>
<div class="tab"></div>
<svg class="ic" style="left:105px;top:17px" width="16" height="16" viewBox="0 0 16 16"><rect width="16" height="16" rx="2" fill="#4285f4"/><rect x="3" y="3.6" width="10" height="1.7" fill="#fff"/><rect x="3" y="7.1" width="10" height="1.7" fill="#fff"/><rect x="3" y="10.6" width="6.5" height="1.7" fill="#fff"/></svg>
<div class="abs" style="left:129px;top:17px;width:178px;height:16px;overflow:hidden"><div class="t" style="left:0;top:2.1px;font-size:12.6px;color:#50555a">Studio Background Info – Google Docs</div><div class="abs" style="right:0;top:0;width:26px;height:16px;background:linear-gradient(90deg,rgba(255,255,255,0),#fff 85%)"></div></div>
<svg class="ic" style="left:309.50px;top:17.20px" width="15" height="15" viewBox="0 0 24 24" fill="#484c50" fill-rule="evenodd"><path d="M19 6.41L17.59 5 12 10.59 6.41 5 5 6.41 10.59 12 5 17.59 6.41 19 12 13.41 17.59 19 19 17.59 13.41 12z"/></svg>
<svg class="ic" style="left:345.10px;top:15.20px" width="19" height="19" viewBox="0 0 24 24" fill="#484c50" fill-rule="evenodd"><path d="M19 13h-6v6h-2v-6H5v-2h6V5h2v6h6v2z"/></svg>
<svg class="ic" style="left:923.00px;top:16.20px" width="18" height="18" viewBox="0 0 24 24" fill="#484c50" fill-rule="evenodd"><path d="M16.59 8.59L12 13.17 7.41 8.59 6 10l6 6 6-6z"/></svg>
<svg class="ic" style="left:12.50px;top:50.20px" width="19" height="19" viewBox="0 0 24 24" fill="#abafb3" fill-rule="evenodd"><path d="M20 11H7.83l5.59-5.59L12 4l-8 8 8 8 1.41-1.41L7.83 13H20v-2z"/></svg>
<svg class="ic" style="left:44.50px;top:50.20px" width="19" height="19" viewBox="0 0 24 24" fill="#abafb3" fill-rule="evenodd"><path d="M12 4l-1.41 1.41L16.17 11H4v2h12.17l-5.58 5.59L12 20l8-8z"/></svg>
<svg class="ic" style="left:76.80px;top:50.20px" width="19" height="19" viewBox="0 0 24 24" fill="#abafb3" fill-rule="evenodd"><path d="M17.65 6.35C16.2 4.9 14.21 4 12 4c-4.42 0-7.99 3.58-7.99 8s3.57 8 7.99 8c3.73 0 6.84-2.55 7.73-6h-2.08c-.82 2.33-3.04 4-5.65 4-3.31 0-6-2.69-6-6s2.69-6 6-6c1.66 0 3.14.69 4.22 1.78L13 11h7V4l-2.35 2.35z"/></svg>
<div class="omni" style="width:549.8px"></div>
<svg class="ic" style="left:121.3px;top:53.9px" width="9.400" height="11.6" viewBox="0 0 10 13"><path d="M2.4 5.2V3.6a2.6 2.6 0 0 1 5.2 0v1.6" fill="none" stroke="#5a5e63" stroke-width="1.5"/><rect x="0.6" y="5" width="8.8" height="7.4" rx="1" fill="#5a5e63"/></svg>
<div class="t" style="left:142px;top:52.5px;font-size:14.6px;color:#6a6e73;width:420px;overflow:hidden"><span style="color:#1f2124;letter-spacing:.15px">docs.google.com</span>/document/d/13wtZnbkSW0zBkYxiTFZoIDKf...</div>
<svg class="ic" style="left:567.65px;top:51.15px" width="17.5" height="17.5" viewBox="0 0 24 24" fill="#5f6368" fill-rule="evenodd"><path d="M15.5 14h-.79l-.28-.27C15.41 12.59 16 11.11 16 9.5 16 5.91 13.09 3 9.5 3S3 5.91 3 9.5 5.91 16 9.5 16c1.61 0 3.09-.59 4.23-1.57l.27.28v.79l5 4.99L20.49 19l-4.99-5zm-6 0C7.01 14 5 11.99 5 9.5S7.01 5 9.5 5 14 7.01 14 9.5 11.99 14 9.5 14zM7 9h5v1H7z"/></svg>
<svg class="ic" style="left:599.65px;top:50.05px" width="17.5" height="17.5" viewBox="0 0 24 24" fill="#50555a" fill-rule="evenodd"><path d="M16 5l-1.42 1.42-1.59-1.59V16h-1.98V4.83L9.42 6.42 8 5l4-4 4 4zm4 5v11c0 1.1-.9 2-2 2H6c-1.11 0-2-.9-2-2V10c0-1.11.89-2 2-2h3v2H6v11h12V10h-3V8h3c1.1 0 2 .9 2 2z"/></svg>
<svg class="ic" style="left:631.30px;top:50.00px" width="19" height="19" viewBox="0 0 24 24" fill="#50555a" fill-rule="evenodd"><path d="M22 9.24l-7.19-.62L12 2 9.19 8.63 2 9.24l5.46 4.73L5.82 21 12 17.27 18.18 21l-1.63-7.03L22 9.24zM12 15.4l-3.76 2.27 1-4.28-3.32-2.88 4.38-.38L12 6.1l1.71 4.04 4.38.38-3.32 2.88 1 4.28L12 15.4z"/></svg>
<div class="abs" style="left:672.0px;top:52px;width:16px;height:16px;border-radius:2px;background:#eec211"></div>
<svg class="ic" style="left:672.0px;top:52px" width="16" height="16" viewBox="0 0 16 16"><circle cx="3" cy="8" r="1.250" fill="#fff"/><circle cx="7" cy="8" r="1.250" fill="#fff"/><circle cx="11" cy="8" r="1.250" fill="#fff"/><rect x="13.4" y="5.300" width="1.200" height="3.200" fill="#f6e08a"/></svg>
<div class="abs" style="left:682.2px;top:62px;width:11.8px;height:11.900px;border-radius:2.5px;background:#4d4d4d;color:#fff;font-size:9.5px;line-height:12px;text-align:center;font-weight:bold">1</div>
<svg class="ic" style="left:704.9px;top:51.800px" width="14.3" height="16.3" viewBox="0 0 14.3 16.3"><path d="M0.25 3 L3.300 2 L4.300 0.400 L5.300 1.200 L6.300 0.200 L7.800 1 Q10.3 1.300 10.4 3.400 L14 3.800 L13.8 5.300 L10.5 6.800 L10.3 8.800 L10.9 11.3 L7.800 12.6 L6.900 10.9 L3.900 16 L3 15.3 L3.400 8.800 L4.800 5.800 L2.800 4.400 L0.300 4.100 Z" fill="#06dfa4"/><path d="M6.200 4.400L9.600 4.700" stroke="#fff" stroke-width=".8"/></svg>
<div class="abs" style="left:731.5px;top:47.5px;width:25px;height:25px;border-radius:50%;background:#fff;box-shadow:0 0.5px 3px rgba(0,0,0,.32)"></div>
<svg class="ic" style="left:736.0px;top:52px" width="16" height="16" viewBox="0 0 16 16"><circle cx="8" cy="8" r="8" fill="#15c39a"/><path d="M11.4 5.300A4.300 4.300 0 1 0 12.2 9.200" fill="none" stroke="#fff" stroke-width="1.150"/><path d="M9.300 9.500 L12.400 9.300 L12.2 11.8" fill="none" stroke="#fff" stroke-width="1.100"/></svg>
<svg class="ic" style="left:767.30px;top:51.70px" width="16" height="16" viewBox="0 0 24 24" fill="#b3b3b3" fill-rule="evenodd"><path d="M20.5 11H19V7c0-1.1-.9-2-2-2h-4V3.5C13 2.12 11.88 1 10.5 1S8 2.12 8 3.5V5H4c-1.1 0-1.99.9-1.99 2v3.8H3.5c1.49 0 2.7 1.21 2.7 2.7s-1.21 2.7-2.7 2.7H2V20c0 1.1.9 2 2 2h3.8v-1.5c0-1.49 1.21-2.7 2.7-2.7 1.49 0 2.7 1.21 2.7 2.7V22H17c1.1 0 2-.9 2-2v-4h1.5c1.38 0 2.5-1.12 2.5-2.5S21.88 11 20.5 11z"/></svg>
<svg class="ic" style="left:800.8px;top:53px" width="14.3" height="13.600" viewBox="0 0 14.3 13.600"><rect x=".9" y=".9" width="12.5" height="11.800" fill="#fff" stroke="#b3b3b3" stroke-width="1.800"/><rect x="8.200" y=".9" width="5.200" height="11.800" fill="#b3b3b3"/></svg>
<svg class="ic" style="left:829.00px;top:48.70px" width="22" height="22" viewBox="0 0 40 40"><defs><clipPath id="c"><circle cx="20" cy="20" r="20"/></clipPath></defs><g clip-path="url(#c)"><rect width="40" height="40" fill="#cfc7bd"/><ellipse cx="20" cy="18" rx="13" ry="15" fill="#2a1a17"/><rect x="7" y="18" width="26" height="24" fill="#2a1a17"/><ellipse cx="20" cy="19" rx="8.2" ry="10.5" fill="#c08a6c"/><path d="M11 14 Q20 2 29 14 Q24 9 20 9.5 Q15 9 11 14z" fill="#2a1a17"/><path d="M4 42 Q6 31 16 30 L20 33 L24 30 Q34 31 36 42z" fill="#8c2f3f"/><path d="M16 29 L20 34 L24 29 L24 26 L16 26z" fill="#b57f62"/><path d="M16.5 23.5 Q20 26.5 23.5 23.5 Q20 25 16.5 23.5z" fill="#fff"/></g></svg>
<div class="abs" style="left:858.0px;top:46px;width:88.5px;height:27.6px;border-radius:14px;border:1px solid #d93025;background:#fceeed"></div>
<div class="t" style="left:871.20px;top:54.20px;font-size:13.9px;color:#50555a;">Update</div>
<svg class="ic" style="left:923.50px;top:51.30px" width="17" height="17" viewBox="0 0 24 24" fill="#d93025" fill-rule="evenodd"><path d="M12 8c1.1 0 2-.9 2-2s-.9-2-2-2-2 .9-2 2 .9 2 2 2zm0 2c-1.1 0-2 .9-2 2s.9 2 2 2 2-.9 2-2-.9-2-2-2zm0 6c-1.1 0-2 .9-2 2s.9 2 2 2 2-.9 2-2-.9-2-2-2z"/></svg>
<svg class="ic" style="left:14.0px;top:85.2px" width="16" height="13.5" viewBox="0 0 16 13.5"><path d="M0.6 1.6 q0-1 1-1 h4 l1.3 1.6 h7.5 q1 0 1 1 v8.7 q0 1 -1 1 h-12.8 q-1 0 -1-1z" fill="#e3e4e6" stroke="#70757a" stroke-width="1.1"/><path d="M0.6 4.2h14.8" stroke="#70757a" stroke-width="1.1"/></svg>
<div class="t" style="left:38.00px;top:86.30px;font-size:12.7px;color:#5a5e63;">Fortinet</div>
<div class="abs" style="left:809.3px;top:83.5px;width:1px;height:16px;background:#c9ccd0"></div>
<svg class="ic" style="left:821.5px;top:85.2px" width="16" height="13.5" viewBox="0 0 16 13.5"><path d="M0.6 1.6 q0-1 1-1 h4 l1.3 1.6 h7.5 q1 0 1 1 v8.7 q0 1 -1 1 h-12.8 q-1 0 -1-1z" fill="#e3e4e6" stroke="#70757a" stroke-width="1.1"/><path d="M0.6 4.2h14.8" stroke="#70757a" stroke-width="1.1"/></svg>
<div class="t" style="left:845.00px;top:86.30px;font-size:12.6px;color:#5a5e63;">Other Bookmarks</div>
<div class="docs"></div>
<svg class="ic" style="left:19px;top:125px" width="23" height="31.5" viewBox="0 0 23 31.5"><path d="M2.2 0H14.5L23 8.5V29.3q0 2.2-2.2 2.2H2.2Q0 31.500 0 29.300V2.200Q0 0 2.200 0z" fill="#2684fc"/><path d="M14.5 0L23 8.5H16.700q-2.200 0-2.200-2.200z" fill="#0a5ad4"/><rect x="5.4" y="14.400" width="12.200" height="1.700" fill="#fff"/><rect x="5.4" y="17.900" width="12.200" height="1.700" fill="#fff"/><rect x="5.4" y="21.400" width="8.800" height="1.700" fill="#fff"/></svg>
<div class="t" style="left:55.00px;top:121.30px;font-size:16.35px;color:#1f1f1f;-webkit-text-stroke:.3px #1f1f1f">Studio Background Info</div>
<svg class="ic" style="left:244.55px;top:122.75px" width="16.5" height="16.5" viewBox="0 0 24 24" fill="#444746" fill-rule="evenodd"><path d="M22 9.24l-7.19-.62L12 2 9.19 8.63 2 9.24l5.46 4.73L5.82 21 12 17.27 18.18 21l-1.63-7.03L22 9.24zM12 15.4l-3.76 2.27 1-4.28-3.32-2.88 4.38-.38L12 6.1l1.71 4.04 4.38.38-3.32 2.88 1 4.28L12 15.4z"/></svg>
<svg class="ic" style="left:273.35px;top:122.75px" width="16.5" height="16.5" viewBox="0 0 24 24" fill="#444746" fill-rule="evenodd"><path d="M20 6h-8l-2-2H4c-1.1 0-2 .9-2 2v12c0 1.1.9 2 2 2h16c1.1 0 2-.9 2-2V8c0-1.1-.9-2-2-2zm0 12H4V6h5.17l2 2H20v10zm-7.5-1l4-4-4-4-1.41 1.41L12.67 12H8v2h4.67l-1.58 1.59L12.5 17z"/></svg>
<svg class="ic" style="left:301.70px;top:122.50px" width="17" height="17" viewBox="0 0 24 24" fill="#444746" fill-rule="evenodd"><path d="M19.35 10.04C18.67 6.59 15.64 4 12 4 9.11 4 6.6 5.64 5.35 8.04 2.34 8.36 0 10.91 0 14c0 3.31 2.69 6 6 6h13c2.76 0 5-2.24 5-5 0-2.64-2.05-4.78-4.65-4.96zM19 18H6c-2.21 0-4-1.79-4-4s1.79-4 4-4h.71C7.37 7.69 9.48 6 12 6c3.04 0 5.5 2.46 5.5 5.5v.5H19c1.66 0 3 1.34 3 3s-1.34 3-3 3zm-9-3.82l-2.09-2.09L6.5 13.5 10 17l6.01-6.01-1.41-1.41z"/></svg>
<div class="menu" style="left:55.2px">File</div>
<div class="menu" style="left:89px">Edit</div>
<div class="menu" style="left:125.5px">View</div>
<div class="menu" style="left:166.6px">Insert</div>
<div class="menu" style="left:214px">Format</div>
<div class="menu" style="left:269.6px">Tools</div>
<div class="menu" style="left:313.8px">Extensions</div>
<div class="menu" style="left:390.7px">Help</div>
<svg class="ic" style="left:642.70px;top:125.60px" width="24" height="24" viewBox="0 0 24 24" fill="#444746" fill-rule="evenodd"><path d="M13 3c-4.97 0-9 4.03-9 9H1l3.89 3.89.07.14L9 12H6c0-3.87 3.13-7 7-7s7 3.13 7 7-3.13 7-7 7c-1.93 0-3.68-.79-4.94-2.06l-1.42 1.42C8.27 19.99 10.51 21 13 21c4.97 0 9-4.03 9-9s-4.03-9-9-9zm-1 5v5l4.28 2.54.72-1.21-3.5-2.08V8H12z"/></svg>
<svg class="ic" style="left:688.00px;top:127.50px" width="22" height="22" viewBox="0 0 24 24" fill="#444746" fill-rule="evenodd"><path d="M21.99 4c0-1.1-.89-2-1.99-2H4c-1.1 0-2 .9-2 2v12c0 1.1.9 2 2 2h14l4 4-.01-18zM20 4v13.17L18.83 16H4V4h16zM6 12h12v2H6zm0-3h12v2H6zm0-3h12v2H6z"/></svg>
<svg class="ic" style="left:734.50px;top:125.50px" width="25" height="25" viewBox="0 0 24 24" fill="#444746" fill-rule="evenodd"><path d="M15 8v8H5V8h10m1-2H4c-.55 0-1 .45-1 1v10c0 .55.45 1 1 1h12c.55 0 1-.45 1-1v-3.5l4 4v-11l-4 4V7c0-.55-.45-1-1-1z"/></svg>
<svg class="ic" style="left:760.50px;top:129.10px" width="17" height="17" viewBox="0 0 24 24" fill="#444746" fill-rule="evenodd"><path d="M7 10l5 5 5-5z"/></svg>
<div class="abs" style="left:793.7px;top:120px;width:95.3px;height:35.8px;border-radius:18px;background:#c2e7ff"></div>
<svg class="ic" style="left:808.00px;top:129.30px" width="16" height="16" viewBox="0 0 24 24" fill="#001d35" fill-rule="evenodd"><path d="M18 8h-1V6c0-2.76-2.24-5-5-5S7 3.24 7 6v2H6c-1.1 0-2 .9-2 2v10c0 1.1.9 2 2 2h12c1.1 0 2-.9 2-2V10c0-1.1-.9-2-2-2zM9 6c0-1.66 1.34-3 3-3s3 1.34 3 3v2H9V6zm9 14H6V10h12v10zm-6-3c1.1 0 2-.9 2-2s-.9-2-2-2-2 .9-2 2 .9 2 2 2z"/></svg>
<div class="t" style="left:831.50px;top:131.90px;font-size:12.7px;color:#001d35;letter-spacing:.1px"><b>Share</b></div>
<svg class="ic" style="left:907.10px;top:123.50px" width="29.0" height="29.0" viewBox="0 0 40 40"><defs><clipPath id="c"><circle cx="20" cy="20" r="20"/></clipPath></defs><g clip-path="url(#c)"><rect width="40" height="40" fill="#cfc7bd"/><ellipse cx="20" cy="18" rx="13" ry="15" fill="#2a1a17"/><rect x="7" y="18" width="26" height="24" fill="#2a1a17"/><ellipse cx="20" cy="19" rx="8.2" ry="10.5" fill="#c08a6c"/><path d="M11 14 Q20 2 29 14 Q24 9 20 9.5 Q15 9 11 14z" fill="#2a1a17"/><path d="M4 42 Q6 31 16 30 L20 33 L24 30 Q34 31 36 42z" fill="#8c2f3f"/><path d="M16 29 L20 34 L24 29 L24 26 L16 26z" fill="#b57f62"/><path d="M16.5 23.5 Q20 26.5 23.5 23.5 Q20 25 16.5 23.5z" fill="#fff"/></g></svg>
<div class="pill" style="width:874.5px"></div>
<svg class="ic" style="left:29.799999999999997px;top:179.7px" width="16" height="16" viewBox="0 0 16 16" fill="none" stroke="#444746" stroke-width="1.5"><path d="M5.2 4.3 L2.7 6.9 L5.3 9.5"/><path d="M3 6.9 H10 A3 3 0 0 1 10 12.9 H5"/></svg>
<svg class="ic" style="left:57.2px;top:179.7px" width="16" height="16" viewBox="0 0 16 16" fill="none" stroke="#444746" stroke-width="1.5"><path d="M10.8 4.3 L13.3 6.9 L10.700 9.5"/><path d="M13 6.9 H6 A3 3 0 0 0 6 12.9 H11"/></svg>
<svg class="ic" style="left:85.00px;top:179.20px" width="17" height="17" viewBox="0 0 24 24" fill="#444746" fill-rule="evenodd"><path d="M19 8h-1V3H6v5H5c-1.66 0-3 1.34-3 3v6h4v4h12v-4h4v-6c0-1.66-1.34-3-3-3zM8 5h8v3H8V5zm8 14H8v-4h8v4zm2-4v-2H6v2H4v-4c0-.55.45-1 1-1h14c.55 0 1 .45 1 1v4h-2zM18 10.5c-.55 0-1 .45-1 1s.45 1 1 1 1-.45 1-1-.45-1-1-1z"/></svg>
<svg class="ic" style="left:113.00px;top:179.70px" width="17" height="17" viewBox="0 0 24 24" fill="#444746" fill-rule="evenodd"><path d="M12.45 16h2.09L9.43 3H7.57L2.46 16h2.09l1.12-3h5.64l1.14 3zm-6.02-5L8.5 5.48 10.57 11H6.43zm15.16.59l-8.09 8.09L9.83 16l-1.41 1.41 5.09 5.09L23 13l-1.41-1.41z"/></svg>
<svg class="ic" style="left:140.6px;top:179.1px" width="16" height="18" viewBox="0 0 16 18" fill="none" stroke="#444746" stroke-width="1.45"><rect x="1.2" y="1.400" width="10.6" height="4.300" rx="1"/><path d="M11.8 3.500H14.1V8.300H7.100V10.5"/><rect x="5.6" y="10.5" width="3" height="5.600" rx=".9"/></svg>
<div class="tb" style="left:170.6px">100%</div>
<svg class="ic" style="left:211.00px;top:179.40px" width="17" height="17" viewBox="0 0 24 24" fill="#444746" fill-rule="evenodd"><path d="M7 10l5 5 5-5z"/></svg>
<div class="sep" style="left:234.4px"></div>
<div class="tb" style="left:248.5px;font-size:13.3px">Normal text</div>
<svg class="ic" style="left:326.00px;top:179.40px" width="17" height="17" viewBox="0 0 24 24" fill="#444746" fill-rule="evenodd"><path d="M7 10l5 5 5-5z"/></svg>
<div class="sep" style="left:351.5px"></div>
<div class="tb" style="left:365px;font-size:13.2px">Arial</div>
<svg class="ic" style="left:419.50px;top:179.40px" width="17" height="17" viewBox="0 0 24 24" fill="#444746" fill-rule="evenodd"><path d="M7 10l5 5 5-5z"/></svg>
<div class="sep" style="left:445.5px"></div>
<div class="abs" style="left:454.600px;top:187.5px;width:10px;height:1.5px;background:#444746"></div>
<div class="abs" style="left:473.3px;top:176.6px;width:30.4px;height:20.6px;border:1px solid #747775;border-radius:4px;font-size:13.2px;line-height:18.6px;text-align:center;color:#1f1f1f">10.5</div>
<svg class="ic" style="left:509.00px;top:180.20px" width="15" height="15" viewBox="0 0 24 24" fill="#444746" fill-rule="evenodd"><path d="M19 13h-6v6h-2v-6H5v-2h6V5h2v6h6v2z"/></svg>
<div class="sep" style="left:531.5px"></div>
<svg class="ic" style="left:539.95px;top:179.35px" width="16.5" height="16.5" viewBox="0 0 24 24" fill="#444746" fill-rule="evenodd"><path d="M15.6 10.79c.97-.67 1.65-1.77 1.65-2.79 0-2.26-1.75-4-4-4H7v14h7.04c2.09 0 3.71-1.7 3.71-3.79 0-1.52-.86-2.82-2.15-3.42zM10 6.5h3c.83 0 1.5.67 1.5 1.5s-.67 1.5-1.5 1.5h-3v-3zm3.5 9H10v-3h3.5c.83 0 1.5.67 1.5 1.5s-.67 1.5-1.5 1.5z"/></svg>
<svg class="ic" style="left:568.00px;top:179.70px" width="17" height="17" viewBox="0 0 24 24" fill="#444746" fill-rule="evenodd"><path d="M10 4v3h2.21l-3.42 8H6v3h8v-3h-2.21l3.42-8H18V4z"/></svg>
<svg class="ic" style="left:595.80px;top:179.30px" width="17" height="17" viewBox="0 0 24 24" fill="#444746" fill-rule="evenodd"><path d="M12 17c3.31 0 6-2.69 6-6V3h-2.5v8c0 1.93-1.57 3.5-3.5 3.5S8.5 12.93 8.5 11V3H6v8c0 3.31 2.69 6 6 6zm-7 2v2h14v-2H5z"/></svg>
<svg class="ic" style="left:625.65px;top:178.85px" width="15.5" height="15.5" viewBox="0 0 24 24" fill="#444746" fill-rule="evenodd"><path d="M11 3L5.5 17h2.25l1.12-3h6.25l1.12 3h2.25L13 3h-2zm-1.38 9L12 5.67 14.38 12H9.62z"/></svg>
<div class="abs" style="left:623px;top:192.8px;width:21px;height:3.2px;background:#000"></div>
<svg class="ic" style="left:657.4px;top:179px" width="12.6" height="11.2" viewBox="0 0 12.6 11.2" fill-rule="evenodd"><path d="M9.500 0 L12.6 3.100 L6.300 10.4 L4.300 10.4 L3.700 11.1 L0 11.1 L2.400 8.600 L2.400 6.700 Z M4.300 6.700 L6.300 8.700 L8.700 5.900 L6.700 3.900 Z" fill="#444746"/></svg>
<div class="sep" style="left:680.8px"></div>
<svg class="ic" style="left:689.90px;top:179.60px" width="17" height="17" viewBox="0 0 24 24" fill="#444746" fill-rule="evenodd"><path d="M12 8c1.1 0 2-.9 2-2s-.9-2-2-2-2 .9-2 2 .9 2 2 2zm0 2c-1.1 0-2 .9-2 2s.9 2 2 2 2-.9 2-2-.9-2-2-2zm0 6c-1.1 0-2 .9-2 2s.9 2 2 2 2-.9 2-2-.9-2-2-2z"/></svg>
<svg class="ic" style="left:793.20px;top:179.00px" width="17" height="17" viewBox="0 0 24 24" fill="#444746" fill-rule="evenodd"><path d="M14.06 9.02l.92.92L5.92 19H5v-.92l9.06-9.06M17.66 3c-.25 0-.51.1-.7.29l-1.83 1.83 3.75 3.75 1.83-1.83c.39-.39.39-1.02 0-1.41l-2.34-2.34c-.2-.2-.45-.29-.71-.29zm-3.6 3.19L3 17.25V21h3.75L17.81 9.94l-3.75-3.75z"/></svg>
<svg class="ic" style="left:812.20px;top:179.40px" width="17" height="17" viewBox="0 0 24 24" fill="#444746" fill-rule="evenodd"><path d="M7 10l5 5 5-5z"/></svg>
<div class="sep" style="left:847.5px"></div>
<svg class="ic" style="left:855.00px;top:178.60px" width="19" height="19" viewBox="0 0 24 24" fill="#444746" fill-rule="evenodd"><path d="M12 8l-6 6 1.41 1.41L12 10.83l4.59 4.58L18 14z"/></svg>
<div class="page" style="left:77.4px;top:227px;width:736px;height:675px"></div>
<div class="abs" style="left:0;top:226px;width:889px;height:1px;background:#d9dce0"></div>
<div class="abs" style="left:173.2px;top:225.5px;width:512.8px;height:1.3px;background:#bdc0c3"></div>
<svg class="ic" style="left:0;top:0" width="954" height="230"><path d="M78.50 219.400V226 M86.50 223V226 M94.50 223V226 M103.50 223V226 M112.50 219.400V226 M120.50 223V226 M128.50 223V226 M137.50 223V226 M146.50 219.400V226 M154.50 223V226 M162.50 223V226 M171.50 223V226 M180.50 219.400V226 M188.50 223V226 M196.50 223V226 M205.50 223V226 M214.50 219.400V226 M222.50 223V226 M230.50 223V226 M239.50 223V226 M248.50 219.400V226 M256.50 223V226 M264.50 223V226 M273.50 223V226 M282.50 219.400V226 M290.50 223V226 M298.50 223V226 M307.50 223V226 M316.50 219.400V226 M324.50 223V226 M332.50 223V226 M341.50 223V226 M350.50 219.400V226 M358.50 223V226 M366.50 223V226 M375.50 223V226 M384.50 219.400V226 M392.50 223V226 M400.50 223V226 M409.50 223V226 M418.50 219.400V226 M426.50 223V226 M434.50 223V226 M443.50 223V226 M452.50 219.400V226 M460.50 223V226 M468.50 223V226 M477.50 223V226 M486.50 219.400V226 M494.50 223V226 M502.50 223V226 M511.50 223V226 M520.50 219.400V226 M528.50 223V226 M536.50 223V226 M545.50 223V226 M554.50 219.400V226 M562.50 223V226 M570.50 223V226 M579.50 223V226 M588.50 219.400V226 M596.50 223V226 M604.50 223V226 M613.50 223V226 M622.50 219.400V226 M630.50 223V226 M638.50 223V226 M647.50 223V226 M656.50 219.400V226 M664.50 223V226 M672.50 223V226 M681.50 223V226 M690.50 219.400V226 M698.50 223V226 M706.50 223V226 M715.50 223V226 M724.50 219.400V226 M732.50 223V226 M740.50 223V226 M749.50 223V226 M758.50 219.400V226 M766.50 223V226 M774.50 223V226 M783.50 223V226 M792.50 219.400V226 M800.50 223V226 M808.50 223V226" stroke="#b9bcbf" stroke-width="1" fill="none"/></svg>
<div class="rn" style="left:128.7px;top:212.800px">1</div>
<div class="rn" style="left:94.7px;top:212.800px">2</div>
<div class="rn" style="left:196.7px;top:212.800px">1</div>
<div class="rn" style="left:230.7px;top:212.800px">2</div>
<div class="rn" style="left:264.7px;top:212.800px">3</div>
<div class="rn" style="left:298.7px;top:212.800px">4</div>
<div class="rn" style="left:366.7px;top:212.800px">6</div>
<div class="rn" style="left:400.7px;top:212.800px">7</div>
<div class="rn" style="left:468.7px;top:212.800px">9</div>
<div class="rn" style="left:502.7px;top:212.800px">10</div>
<div class="rn" style="left:536.7px;top:212.800px">11</div>
<div class="rn" style="left:570.7px;top:212.800px">12</div>
<div class="rn" style="left:604.7px;top:212.800px">13</div>
<div class="rn" style="left:638.7px;top:212.800px">14</div>
<div class="rn" style="left:672.7px;top:212.800px">15</div>
<div class="rn" style="left:706.7px;top:212.800px">16</div>
<div class="rn" style="left:740.7px;top:212.800px">17</div>
<div class="rn" style="left:774.7px;top:212.800px">18</div>
<div class="rn" style="left:808.7px;top:212.800px">19</div>
<div class="abs" style="left:331.0px;top:211.5px;width:20px;height:11.5px;background:#e4e6e9"></div>
<div class="abs" style="left:340.5px;top:212.5px;width:1px;height:9.5px;background:repeating-linear-gradient(180deg,#6a6d70 0 2px,transparent 2px 3.5px)"></div>
<div class="abs" style="left:434.5px;top:211.5px;width:20px;height:11.5px;background:#e4e6e9"></div>
<div class="abs" style="left:444.0px;top:212.5px;width:1px;height:9.5px;background:repeating-linear-gradient(180deg,#6a6d70 0 2px,transparent 2px 3.5px)"></div>
<div class="abs" style="left:544.0px;top:211.5px;width:20px;height:11.5px;background:#e4e6e9"></div>
<div class="abs" style="left:553.5px;top:212.5px;width:1px;height:9.5px;background:repeating-linear-gradient(180deg,#6a6d70 0 2px,transparent 2px 3.5px)"></div>
<div class="abs" style="left:556.6px;top:214.4px;width:10.9px;height:2.8px;background:#4285f4"></div>
<svg class="ic" style="left:556.8px;top:218.600px" width="10.6" height="5.200"><path d="M0 0H10.6L5.3 5.2z" fill="#4285f4"/></svg>
<svg class="ic" style="left:680.7px;top:218.600px" width="10.6" height="5.200"><path d="M0 0H10.6L5.3 5.2z" fill="#4285f4"/></svg>
<div class="abs" style="left:0;top:227px;width:13.6px;height:675px;background:#f9fbfd"></div>
<div class="abs" style="left:13.3px;top:227px;width:1px;height:675px;background:#dfe2e5"></div>
<svg class="ic" style="left:0;top:0" width="16" height="902"><path d="M6.3 230.50H13.6 M10.2 239.50H13.6 M10.2 248.50H13.6 M10.2 256.50H13.6 M6.3 265.50H13.6 M10.2 273.50H13.6 M10.2 282.50H13.6 M10.2 290.50H13.6 M6.3 299.50H13.6 M10.2 307.50H13.6 M10.2 316.50H13.6 M10.2 324.50H13.6 M6.3 333.50H13.6 M10.2 341.50H13.6 M10.2 350.50H13.6 M10.2 358.50H13.6 M6.3 367.50H13.6 M10.2 375.50H13.6 M10.2 384.50H13.6 M10.2 392.50H13.6 M6.3 401.50H13.6 M10.2 409.50H13.6 M10.2 418.50H13.6 M10.2 426.50H13.6 M6.3 435.50H13.6 M10.2 443.50H13.6 M10.2 452.50H13.6 M10.2 460.50H13.6 M6.3 469.50H13.6 M10.2 477.50H13.6 M10.2 486.50H13.6 M10.2 494.50H13.6 M6.3 503.50H13.6 M10.2 511.50H13.6 M10.2 520.50H13.6 M10.2 528.50H13.6 M6.3 537.50H13.6 M10.2 545.50H13.6 M10.2 554.50H13.6 M10.2 562.50H13.6 M6.3 571.50H13.6 M10.2 579.50H13.6 M10.2 588.50H13.6 M10.2 597.50H13.6 M6.3 605.50H13.6 M10.2 614.50H13.6 M10.2 622.50H13.6 M10.2 631.50H13.6 M6.3 639.50H13.6 M10.2 648.50H13.6 M10.2 656.50H13.6 M10.2 665.50H13.6 M6.3 673.50H13.6 M10.2 682.50H13.6 M10.2 690.50H13.6 M10.2 699.50H13.6 M6.3 707.50H13.6 M10.2 716.50H13.6 M10.2 724.50H13.6 M10.2 733.50H13.6 M6.3 741.50H13.6 M10.2 750.50H13.6 M10.2 758.50H13.6 M10.2 767.50H13.6 M6.3 775.50H13.6 M10.2 784.50H13.6 M10.2 792.50H13.6 M10.2 801.50H13.6 M6.3 809.50H13.6 M10.2 818.50H13.6 M10.2 826.50H13.6 M10.2 835.50H13.6 M6.3 843.50H13.6 M10.2 852.50H13.6 M10.2 860.50H13.6 M10.2 869.50H13.6 M6.3 877.50H13.6 M10.2 886.50H13.6 M10.2 894.50H13.6" stroke="#b0b3b6" stroke-width="1" fill="none"/><path d="M13.8 317.5V902" stroke="#a6a9ac" stroke-width="1.6"/></svg>
<div class="vn" style="left:6px;top:282.1px">1</div>
<div class="vn" style="left:6px;top:316.1px">2</div>
<div class="vn" style="left:6px;top:350.1px">3</div>
<div class="vn" style="left:6px;top:418.2px">5</div>
<div class="vn" style="left:6px;top:486.3px">7</div>
<div class="vn" style="left:6px;top:520.4px">8</div>
<div class="vn" style="left:6px;top:554.5px">9</div>
<div class="vn" style="left:6px;top:588.5px">10</div>
<div class="vn" style="left:6px;top:622.5px">11</div>
<div class="vn" style="left:6px;top:656.6px">12</div>
<div class="vn" style="left:6px;top:690.6px">13</div>
<div class="vn" style="left:6px;top:724.7px">14</div>
<div class="vn" style="left:6px;top:758.8px">15</div>
<div class="vn" style="left:6px;top:826.8px">17</div>
<div class="vn" style="left:6px;top:860.9px">18</div>
<div class="vn" style="left:6px;top:894.9px">19</div>
<div class="abs" style="left:0;top:369.4px;width:11.6px;height:21.2px;background:#ececec;border-top:1px solid #e2e2e2;border-bottom:1px solid #e2e2e2"></div>
<div class="abs" style="left:11.6px;top:370.0px;width:3.400px;height:20px;background:#f9fbfd"></div>
<div class="abs" style="left:10.2px;top:373.5px;width:3.400px;height:1px;background:#b0b3b6"></div>
<div class="abs" style="left:10.2px;top:385.5px;width:3.400px;height:1px;background:#b0b3b6"></div>
<div class="abs" style="left:1.200px;top:379.4px;width:9.500px;height:1.100px;background:repeating-linear-gradient(90deg,#5a5a5a 0 2.400px,transparent 2.400px 3.600px)"></div>
<div class="abs" style="left:0;top:441.4px;width:11.6px;height:21.2px;background:#ececec;border-top:1px solid #e2e2e2;border-bottom:1px solid #e2e2e2"></div>
<div class="abs" style="left:11.6px;top:442.0px;width:3.400px;height:20px;background:#f9fbfd"></div>
<div class="abs" style="left:10.2px;top:445.5px;width:3.400px;height:1px;background:#b0b3b6"></div>
<div class="abs" style="left:10.2px;top:457.5px;width:3.400px;height:1px;background:#b0b3b6"></div>
<div class="abs" style="left:1.200px;top:451.4px;width:9.500px;height:1.100px;background:repeating-linear-gradient(90deg,#5a5a5a 0 2.400px,transparent 2.400px 3.600px)"></div>
<div class="abs" style="left:0;top:529.9px;width:11.6px;height:21.2px;background:#ececec;border-top:1px solid #e2e2e2;border-bottom:1px solid #e2e2e2"></div>
<div class="abs" style="left:11.6px;top:530.5px;width:3.400px;height:20px;background:#f9fbfd"></div>
<div class="abs" style="left:10.2px;top:534.0px;width:3.400px;height:1px;background:#b0b3b6"></div>
<div class="abs" style="left:10.2px;top:546.0px;width:3.400px;height:1px;background:#b0b3b6"></div>
<div class="abs" style="left:1.200px;top:539.9px;width:9.500px;height:1.100px;background:repeating-linear-gradient(90deg,#5a5a5a 0 2.400px,transparent 2.400px 3.600px)"></div>
<div class="abs" style="left:0;top:619.4px;width:11.6px;height:21.2px;background:#ececec;border-top:1px solid #e2e2e2;border-bottom:1px solid #e2e2e2"></div>
<div class="abs" style="left:11.6px;top:620.0px;width:3.400px;height:20px;background:#f9fbfd"></div>
<div class="abs" style="left:10.2px;top:623.5px;width:3.400px;height:1px;background:#b0b3b6"></div>
<div class="abs" style="left:10.2px;top:635.5px;width:3.400px;height:1px;background:#b0b3b6"></div>
<div class="abs" style="left:1.200px;top:629.4px;width:9.500px;height:1.100px;background:repeating-linear-gradient(90deg,#5a5a5a 0 2.400px,transparent 2.400px 3.600px)"></div>
<div class="abs" style="left:0;top:691.4px;width:11.6px;height:21.2px;background:#ececec;border-top:1px solid #e2e2e2;border-bottom:1px solid #e2e2e2"></div>
<div class="abs" style="left:11.6px;top:692.0px;width:3.400px;height:20px;background:#f9fbfd"></div>
<div class="abs" style="left:10.2px;top:695.5px;width:3.400px;height:1px;background:#b0b3b6"></div>
<div class="abs" style="left:10.2px;top:707.5px;width:3.400px;height:1px;background:#b0b3b6"></div>
<div class="abs" style="left:1.200px;top:701.4px;width:9.500px;height:1.100px;background:repeating-linear-gradient(90deg,#5a5a5a 0 2.400px,transparent 2.400px 3.600px)"></div>
<div class="abs" style="left:0;top:780.4px;width:11.6px;height:21.2px;background:#ececec;border-top:1px solid #e2e2e2;border-bottom:1px solid #e2e2e2"></div>
<div class="abs" style="left:11.6px;top:781.0px;width:3.400px;height:20px;background:#f9fbfd"></div>
<div class="abs" style="left:10.2px;top:784.5px;width:3.400px;height:1px;background:#b0b3b6"></div>
<div class="abs" style="left:10.2px;top:796.5px;width:3.400px;height:1px;background:#b0b3b6"></div>
<div class="abs" style="left:1.200px;top:790.4px;width:9.500px;height:1.100px;background:repeating-linear-gradient(90deg,#5a5a5a 0 2.400px,transparent 2.400px 3.600px)"></div>
<div class="abs" style="left:0;top:869.4px;width:11.6px;height:21.2px;background:#ececec;border-top:1px solid #e2e2e2;border-bottom:1px solid #e2e2e2"></div>
<div class="abs" style="left:11.6px;top:870.0px;width:3.400px;height:20px;background:#f9fbfd"></div>
<div class="abs" style="left:10.2px;top:873.5px;width:3.400px;height:1px;background:#b0b3b6"></div>
<div class="abs" style="left:10.2px;top:885.5px;width:3.400px;height:1px;background:#b0b3b6"></div>
<div class="abs" style="left:1.200px;top:879.4px;width:9.500px;height:1.100px;background:repeating-linear-gradient(90deg,#5a5a5a 0 2.400px,transparent 2.400px 3.600px)"></div>
<svg class="ic" style="left:35.75px;top:245.35px" width="20.5" height="20.5" viewBox="0 0 24 24" fill="#444746" fill-rule="evenodd"><path d="M4 10.5c-.83 0-1.5.67-1.5 1.5s.67 1.5 1.5 1.5 1.5-.67 1.5-1.5-.67-1.5-1.5-1.5zm0-6c-.83 0-1.5.67-1.5 1.5S3.17 7.5 4 7.5 5.5 6.83 5.5 6 4.83 4.5 4 4.5zm0 12c-.83 0-1.5.68-1.5 1.5s.68 1.5 1.5 1.5 1.5-.68 1.5-1.5-.67-1.5-1.5-1.5zM7 19h14v-2H7v2zm0-6h14v-2H7v2zm0-8v2h14V5H7z"/></svg>
<div class="abs" style="left:893px;top:260px;width:6.500px;height:18px;border-radius:3.2px;background:#dadce0"></div>
<svg class="ic" style="left:920.1px;top:180.0px" width="18" height="18" viewBox="0 0 18 18"><path d="M0 2q0-2 2-2H14.200V3.800H3.800V14.200H0z" fill="#4285f4"/><path d="M0 14.200h3.800V18H2q-2 0-2-2z" fill="#188038"/><path d="M3.800 14.200h10.4V18H3.800z" fill="#34a853"/><path d="M14.200 3.800H18v10.4h-3.800z" fill="#fbbc04"/><path d="M14.200 14.200H18L14.200 18z" fill="#ea4335"/><path d="M14.200 0H16q2 0 2 2v1.800h-3.800z" fill="#1967d2"/><rect x="3.800" y="3.800" width="10.4" height="10.4" fill="#fff"/><text x="9" y="11.900" font-size="7" font-weight="bold" text-anchor="middle" fill="#1a73e8" font-family="Liberation Sans" letter-spacing="-.3">31</text></svg>
<svg class="ic" style="left:920.6px;top:230.8px" width="17" height="17" viewBox="0 0 17 17"><rect width="17" height="17" rx="1.8" fill="#fbbc04"/><path d="M8.5 3.800a3.200 3.200 0 0 1 1.700 5.900v1.200H6.800V9.700A3.200 3.200 0 0 1 8.500 3.800zM6.900 11.800h3.200v1.300H6.900z" fill="#fff"/></svg>
<svg class="ic" style="left:919.6px;top:280.0px" width="19" height="19" viewBox="0 0 19 19"><circle cx="9" cy="10" r="6.400" fill="none" stroke="#1a73e8" stroke-width="2.4"/><path d="M5.800 9.800l2.500 2.500 5-5.300" fill="none" stroke="#1a73e8" stroke-width="2.200"/><circle cx="15.5" cy="3.800" r="1.600" fill="#1a73e8"/></svg>
<svg class="ic" style="left:921.1px;top:331.0px" width="16" height="18" viewBox="0 0 16 18"><circle cx="8" cy="4.500" r="3.300" fill="#1a73e8"/><path d="M1.800 16.500v-2.200q0-4.300 6.200-4.300t6.200 4.300v2.200z" fill="#1a56db"/><path d="M10.500 10.300q3.700.8 3.700 4v2.200H9z" fill="#4d8bf5" opacity=".7"/></svg>
<svg class="ic" style="left:923.2px;top:383.1px" width="11.8" height="16.4" viewBox="0 0 13 18"><path d="M6.500 0A6.400 6.400 0 0 0 .1 6.400c0 4.300 6.400 11.600 6.400 11.600z" fill="#34a853"/><path d="M6.500 0a6.400 6.400 0 0 1 6.400 6.400c0 4.300-6.400 11.600-6.400 11.600z" fill="#fbbc04"/><path d="M6.500 0A6.400 6.400 0 0 0 .7 3.700l5.800 2.700z" fill="#ea4335"/><path d="M6.500 0a6.400 6.400 0 0 1 5.800 3.700L6.500 6.400z" fill="#4285f4"/><circle cx="6.500" cy="6.400" r="2.300" fill="#fff"/></svg>
<div class="abs" style="left:920.1px;top:430px;width:18px;height:1px;background:#dcdfe3"></div>
<svg class="ic" style="left:918.60px;top:459.80px" width="21" height="21" viewBox="0 0 24 24" fill="#1f1f1f" fill-rule="evenodd"><path d="M19 13h-6v6h-2v-6H5v-2h6V5h2v6h6v2z"/></svg>
<svg class="ic" style="left:920.60px;top:868.00px" width="18" height="18" viewBox="0 0 24 24" fill="#444746" fill-rule="evenodd"><path d="M10 6L8.59 7.41 13.17 12l-4.58 4.59L10 18l6-6z"/></svg>
<div class="doc">
<div class="l" style="left:163.7px;top:249.60px;font-size:21.5px;line-height:24px;height:24px"><b>Users</b></div>
<div class="abs" style="left:164.0px;top:307.7px;width:532.5px;height:594.3px;background:#fff"></div>
<div class="abs" style="left:164.0px;top:380.0px;width:176.5px;height:72.0px;background:#cfe2f3"></div>
<div class="abs" style="left:164px;top:307.2px;width:1px;height:902.0px;background:#dadada"></div>
<div class="abs" style="left:340px;top:307.2px;width:1px;height:902.0px;background:#dadada"></div>
<div class="abs" style="left:444px;top:307.2px;width:1px;height:902.0px;background:#dadada"></div>
<div class="abs" style="left:552px;top:307.2px;width:1px;height:902.0px;background:#dadada"></div>
<div class="abs" style="left:696px;top:307.2px;width:1px;height:902.0px;background:#dadada"></div>
<div class="abs" style="left:163.5px;top:306.9px;width:533.5px;height:1.6px;background:#e8e8e8"></div>
<div class="abs" style="left:163.5px;top:379.2px;width:533.5px;height:1.6px;background:#e8e8e8"></div>
<div class="abs" style="left:163.5px;top:451.2px;width:533.5px;height:1.6px;background:#e8e8e8"></div>
<div class="abs" style="left:163.5px;top:539.7px;width:533.5px;height:1.6px;background:#e8e8e8"></div>
<div class="abs" style="left:163.5px;top:629.2px;width:533.5px;height:1.6px;background:#e8e8e8"></div>
<div class="abs" style="left:163.5px;top:701.2px;width:533.5px;height:1.6px;background:#e8e8e8"></div>
<div class="abs" style="left:163.5px;top:790.2px;width:533.5px;height:1.6px;background:#e8e8e8"></div>
<div class="abs" style="left:163.5px;top:879.2px;width:533.5px;height:1.6px;background:#e8e8e8"></div>
<div class="l" style="left:173.9px;top:318.37px"><b>Description</b></div>
<div class="l" style="left:350.4px;top:318.37px"><b>User,</b></div>
<div class="l" style="left:350.4px;top:335.63px"><b>Stakeholder</b></div>
<div class="l" style="left:350.4px;top:352.89px"><b>or SME</b></div>
<div class="l" style="left:454.1px;top:318.37px"><b>Module</b></div>
<div class="l" style="left:562.4px;top:318.37px"><b>Comment</b></div>
<div class="l" style="left:173.9px;top:390.67px">There is a back office team</div>
<div class="l" style="left:173.9px;top:407.93px">(user persona)</div>
<div class="l" style="left:350.4px;top:390.67px">Sean and</div>
<div class="l" style="left:350.4px;top:407.93px">Anish</div>
<div class="l" style="left:454.1px;top:390.67px">Content Studio</div>
<div class="l" style="left:562.4px;top:390.67px">Billing rules, workflow</div>
<div class="l" style="left:562.4px;top:407.93px">definition,</div>
<div class="l" style="left:562.4px;top:425.19px">provisioning rules</div>
<div class="l" style="left:173.9px;top:462.67px">There is a marketing team</div>
<div class="l" style="left:173.9px;top:479.93px">(user persona)</div>
<div class="l" style="left:350.4px;top:462.67px">Sean and</div>
<div class="l" style="left:350.4px;top:479.93px">Anish</div>
<div class="l" style="left:454.1px;top:462.67px">Content Studio</div>
<div class="l" style="left:562.4px;top:462.67px">Concerned with</div>
<div class="l" style="left:562.4px;top:479.93px">product meta data</div>
<div class="l" style="left:562.4px;top:497.19px">and content as well</div>
<div class="l" style="left:562.4px;top:514.45px">as promotions</div>
<div class="l" style="left:173.9px;top:551.17px">Cross module work is</div>
<div class="l" style="left:173.9px;top:568.43px">almost exclusively for</div>
<div class="l" style="left:173.9px;top:585.69px">internal teams and not</div>
<div class="l" style="left:173.9px;top:602.95px">external</div>
<div class="l" style="left:350.4px;top:551.17px">Jason, Asgeir,</div>
<div class="l" style="left:350.4px;top:568.43px">Sunita and</div>
<div class="l" style="left:350.4px;top:585.69px">Geoff</div>
<div class="l" style="left:454.1px;top:551.17px">All</div>
<div class="l" style="left:173.9px;top:640.67px">Users vary in skill level from</div>
<div class="l" style="left:173.9px;top:657.93px">very new to ‘Power Users’.</div>
<div class="l" style="left:350.4px;top:640.67px">Andrew, Brian,</div>
<div class="l" style="left:350.4px;top:657.93px">Danielsen</div>
<div class="l" style="left:454.1px;top:640.67px">Configuration</div>
<div class="l" style="left:454.1px;top:657.93px">and Content</div>
<div class="l" style="left:454.1px;top:675.19px">Studio</div>
<div class="l" style="left:173.9px;top:712.67px">One of the biggest hurdles</div>
<div class="l" style="left:173.9px;top:729.93px">new users have is</div>
<div class="l" style="left:173.9px;top:747.19px">understanding the domain</div>
<div class="l" style="left:173.9px;top:764.45px">and how things are related.</div>
<div class="l" style="left:350.4px;top:712.67px">Andrew, Brian,</div>
<div class="l" style="left:350.4px;top:729.93px">Danielsen</div>
<div class="l" style="left:454.1px;top:712.67px">Content Studio</div>
<div class="l" style="left:173.9px;top:801.67px">Redbox has been a client</div>
<div class="l" style="left:173.9px;top:818.93px">for over a year and they still</div>
<div class="l" style="left:173.9px;top:836.19px">ask for help from time to</div>
<div class="l" style="left:173.9px;top:853.45px">time.</div>
<div class="l" style="left:350.4px;top:801.67px">Andrew, Brian,</div>
<div class="l" style="left:350.4px;top:818.93px">Danielsen</div>
<div class="l" style="left:454.1px;top:801.67px">Content Studio</div>
<div class="l" style="left:173.9px;top:890.67px">Technical Proficiency</div>
<div class="l" style="left:173.9px;top:907.93px">varies</div>
<div class="l" style="left:350.4px;top:890.67px">Michael, Ted,</div>
<div class="l" style="left:454.1px;top:890.67px">Configuration</div>
<div class="l" style="left:454.1px;top:907.93px">and</div>
<div class="l" style="left:562.4px;top:890.67px">Some clients have a</div>
<div class="abs" style="left:683px;top:455px;width:11.5px;height:11px;border:1px solid #e3e3e3;background:#fff"></div>
<svg class="ic" style="left:685.3px;top:459px" width="7" height="4"><path d="M0 0H7L3.500 4z" fill="#c4c4c4"/></svg>
<div class="abs" style="left:102px;top:791px;width:62px;height:89px;border:1px solid #e6e6e6;border-radius:5px 0 0 5px;background:#fff"></div>
<svg class="ic" style="left:105.50px;top:828.50px" width="14" height="14" viewBox="0 0 24 24" fill="#c8c8c8" fill-rule="evenodd"><path d="M11 18c0 1.1-.9 2-2 2s-2-.9-2-2 .9-2 2-2 2 .9 2 2zm-2-8c-1.1 0-2 .9-2 2s.9 2 2 2 2-.9 2-2-.9-2-2-2zm0-6c-1.1 0-2 .9-2 2s.9 2 2 2 2-.9 2-2-.9-2-2-2zm6 4c1.1 0 2-.9 2-2s-.9-2-2-2-2 .9-2 2 .9 2 2 2zm0 2c-1.1 0-2 .9-2 2s.9 2 2 2 2-.9 2-2-.9-2-2-2zm0 6c-1.1 0-2 .9-2 2s.9 2 2 2 2-.9 2-2-.9-2-2-2z"/></svg>
<svg class="ic" style="left:125.10px;top:827.70px" width="15" height="15" viewBox="0 0 24 24" fill="#303030" fill-rule="evenodd"><path d="M14 4v5c0 1.12.37 2.16 1 3H9c.65-.86 1-1.9 1-3V4h4m3-2H7c-.55 0-1 .45-1 1s.45 1 1 1h1v5c0 1.66-1.34 3-3 3v2h5.97v7l1 1 1-1v-7H19v-2c-1.66 0-3-1.34-3-3V4h1c.55 0 1-.45 1-1s-.45-1-1-1z"/></svg>
<svg class="ic" style="left:144.00px;top:827.50px" width="16" height="16" viewBox="0 0 24 24" fill="#303030" fill-rule="evenodd"><path d="M19 13h-6v6h-2v-6H5v-2h6V5h2v6h6v2z"/></svg>
</div>
</div>
</body></html>
